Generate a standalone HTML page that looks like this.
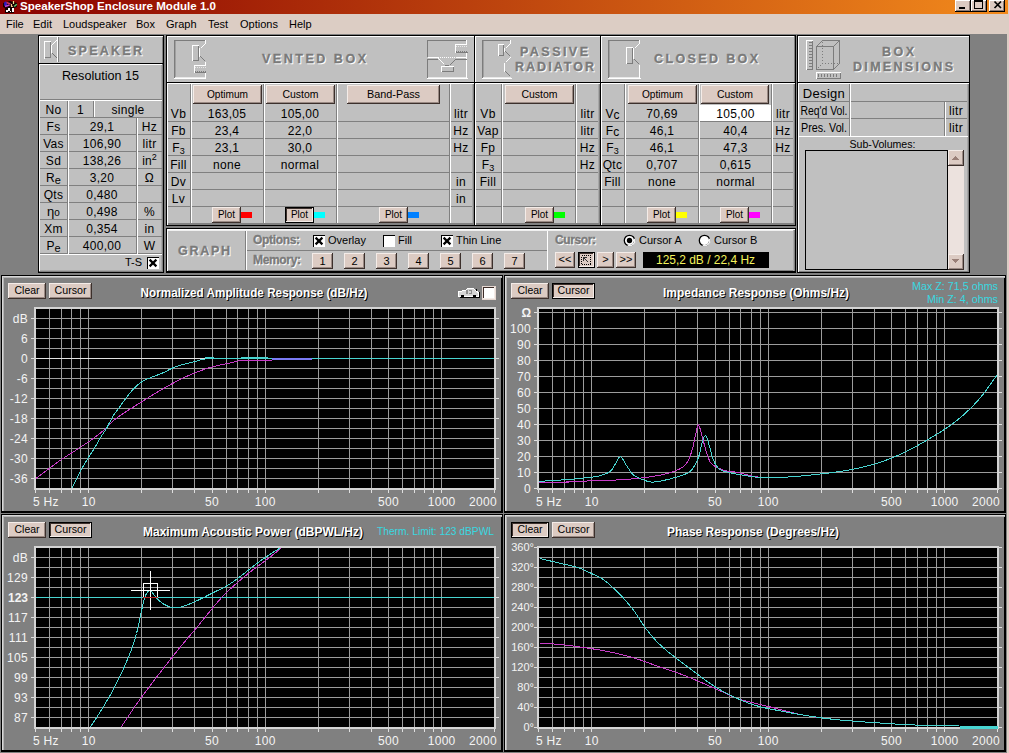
<!DOCTYPE html>
<html><head><meta charset="utf-8"><title>SpeakerShop Enclosure Module 1.0</title>
<style>html,body{margin:0;padding:0;background:#808080;overflow:hidden}
svg{display:block;font-family:"Liberation Sans", sans-serif}
text{font-family:"Liberation Sans", sans-serif}</style></head>
<body><svg width="1009" height="753" viewBox="0 0 1009 753" shape-rendering="crispEdges">
<rect x="0" y="0" width="1009" height="753" fill="#808080"/>
<rect x="1007" y="0" width="2" height="753" fill="#dccdc4"/>
<defs><linearGradient id="tg" x1="0" x2="1" y1="0" y2="0"><stop offset="0" stop-color="#8a0000"/><stop offset="1" stop-color="#f28a1c"/></linearGradient></defs>
<rect x="0" y="0" width="1008" height="14" fill="url(#tg)"/>
<text x="20" y="10" font-size="11.5" fill="#fff" font-weight="bold" textLength="196" lengthAdjust="spacingAndGlyphs">SpeakerShop Enclosure Module 1.0</text>
<g shape-rendering="auto"><path d="M3 3 L10 1 L17 3 L17 7 L14 8 L14 13 L5 13 L5 8 L3 7 Z" fill="#000" opacity="0.85"/><ellipse cx="5.6" cy="4" rx="1.6" ry="2.4" fill="#3018c0"/><path d="M5 6.5 L9.5 5" stroke="#c040d0" stroke-width="1.6"/><path d="M6.5 2.5 L10.5 4" stroke="#d03060" stroke-width="1.4"/><path d="M11.5 4 L11.5 6.5 L12.8 6.5" stroke="#f8c890" stroke-width="1.2" fill="none"/><path d="M13.5 1 L13.5 4" stroke="#f0e090" stroke-width="1.2"/><path d="M14.2 6.5 L16.8 4.2" stroke="#60d070" stroke-width="1.4"/></g>
<rect x="6" y="10" width="2" height="2" fill="#fff"/>
<rect x="8" y="8" width="2" height="3" fill="#fff"/>
<rect x="10" y="11" width="1" height="1" fill="#fff"/>
<rect x="12" y="8" width="2" height="4" fill="#fff"/>
<rect x="955" y="0" width="16" height="12" fill="#dccbc3"/>
<rect x="955" y="0" width="16" height="1" fill="#fff"/>
<rect x="955" y="0" width="1" height="12" fill="#fff"/>
<rect x="955" y="11" width="16" height="1" fill="#000"/>
<rect x="970" y="0" width="1" height="12" fill="#000"/>
<rect x="956" y="10" width="14" height="1" fill="#8a7a74"/>
<rect x="969" y="1" width="1" height="10" fill="#8a7a74"/>
<rect x="971" y="0" width="16" height="12" fill="#dccbc3"/>
<rect x="971" y="0" width="16" height="1" fill="#fff"/>
<rect x="971" y="0" width="1" height="12" fill="#fff"/>
<rect x="971" y="11" width="16" height="1" fill="#000"/>
<rect x="986" y="0" width="1" height="12" fill="#000"/>
<rect x="972" y="10" width="14" height="1" fill="#8a7a74"/>
<rect x="985" y="1" width="1" height="10" fill="#8a7a74"/>
<rect x="989" y="0" width="16" height="12" fill="#dccbc3"/>
<rect x="989" y="0" width="16" height="1" fill="#fff"/>
<rect x="989" y="0" width="1" height="12" fill="#fff"/>
<rect x="989" y="11" width="16" height="1" fill="#000"/>
<rect x="1004" y="0" width="1" height="12" fill="#000"/>
<rect x="990" y="10" width="14" height="1" fill="#8a7a74"/>
<rect x="1003" y="1" width="1" height="10" fill="#8a7a74"/>
<rect x="959" y="7" width="6" height="2" fill="#000"/>
<rect x="974" y="0" width="9" height="1" fill="#000"/>
<rect x="974" y="8" width="9" height="1" fill="#000"/>
<rect x="974" y="0" width="1" height="9" fill="#000"/>
<rect x="982" y="0" width="1" height="9" fill="#000"/>
<rect x="974" y="1" width="9" height="1" fill="#000"/>
<path d="M994.5 1.5 L1001 8 M1001 1.5 L994.5 8" stroke="#000" stroke-width="1.7" shape-rendering="auto"/>
<rect x="0" y="14" width="1009" height="20" fill="#dccdc4"/>
<text x="6" y="28" font-size="11" fill="#000">File</text>
<text x="33" y="28" font-size="11" fill="#000">Edit</text>
<text x="63" y="28" font-size="11" fill="#000">Loudspeaker</text>
<text x="136" y="28" font-size="11" fill="#000">Box</text>
<text x="166" y="28" font-size="11" fill="#000">Graph</text>
<text x="208" y="28" font-size="11" fill="#000">Test</text>
<text x="240" y="28" font-size="11" fill="#000">Options</text>
<text x="289" y="28" font-size="11" fill="#000">Help</text>
<rect x="38" y="35" width="126" height="1" fill="#000"/>
<rect x="38" y="272" width="126" height="1" fill="#000"/>
<rect x="38" y="35" width="1" height="238" fill="#000"/>
<rect x="163" y="35" width="1" height="238" fill="#000"/>
<rect x="39" y="36" width="124" height="236" fill="#c0c0c0"/>
<rect x="39" y="36" width="124" height="1" fill="#fff"/>
<rect x="39" y="36" width="1" height="27" fill="#fff"/>
<rect x="162" y="37" width="1" height="26" fill="#808080"/>
<rect x="39" y="63" width="124" height="1" fill="#000"/>
<rect x="39" y="64" width="124" height="1" fill="#fff"/>
<rect x="39" y="64" width="1" height="208" fill="#fff"/>
<rect x="161" y="65" width="1" height="206" fill="#a8a8a8"/>
<rect x="162" y="64" width="1" height="208" fill="#808080"/>
<rect x="40" y="270" width="122" height="1" fill="#a8a8a8"/>
<rect x="39" y="271" width="124" height="1" fill="#808080"/>
<rect x="44" y="41" width="7" height="1" fill="#fff"/>
<rect x="44" y="41" width="1" height="18" fill="#fff"/>
<rect x="45" y="57" width="6" height="1" fill="#808080"/>
<rect x="50" y="42" width="1" height="16" fill="#808080"/>
<path d="M51.5 45.5 L57 40 M51.5 45 L51.5 53.5" stroke="#fff" stroke-width="1" fill="none" shape-rendering="auto"/><path d="M52 53 L57 58" stroke="#707070" stroke-width="1" fill="none" shape-rendering="auto"/>
<rect x="57" y="37" width="1" height="25" fill="#fff"/>
<rect x="58" y="37" width="1" height="25" fill="#808080"/>
<text x="69" y="55.5" font-size="12.5" fill="#ffffff" font-weight="bold" textLength="74" lengthAdjust="spacing" letter-spacing="0" stroke="#ffffff" stroke-width="0.35">SPEAKER</text>
<text x="68" y="54.5" font-size="12.5" fill="#7a7a7a" font-weight="bold" textLength="74" lengthAdjust="spacing" letter-spacing="0" stroke="#7a7a7a" stroke-width="0.35">SPEAKER</text>
<text x="100.5" y="80" font-size="13" fill="#000" text-anchor="middle" textLength="77" lengthAdjust="spacingAndGlyphs">Resolution 15</text>
<rect x="40" y="99" width="122" height="1" fill="#808080"/>
<rect x="40" y="100" width="122" height="1" fill="#fff"/>
<rect x="40" y="117" width="122" height="1" fill="#808080"/>
<rect x="40" y="134" width="122" height="1" fill="#808080"/>
<rect x="40" y="151" width="122" height="1" fill="#808080"/>
<rect x="40" y="168" width="122" height="1" fill="#808080"/>
<rect x="40" y="185" width="122" height="1" fill="#808080"/>
<rect x="40" y="202" width="122" height="1" fill="#808080"/>
<rect x="40" y="219" width="122" height="1" fill="#808080"/>
<rect x="40" y="236" width="122" height="1" fill="#808080"/>
<rect x="40" y="253" width="122" height="1" fill="#808080"/>
<rect x="40" y="254" width="122" height="1" fill="#fff"/>
<rect x="67" y="101" width="1" height="153" fill="#808080"/>
<rect x="68" y="101" width="1" height="153" fill="#fff"/>
<rect x="136" y="118" width="1" height="136" fill="#808080"/>
<rect x="137" y="118" width="1" height="136" fill="#fff"/>
<rect x="93" y="101" width="1" height="16" fill="#808080"/>
<rect x="94" y="101" width="1" height="16" fill="#fff"/>
<text x="53.5" y="114" font-size="12" fill="#000" text-anchor="middle" letter-spacing="0.3">No</text>
<text x="80.5" y="114" font-size="12" fill="#000" text-anchor="middle" letter-spacing="0.3">1</text>
<text x="128" y="114" font-size="12" fill="#000" text-anchor="middle" letter-spacing="0.3">single</text>
<text x="53.5" y="131" font-size="12" fill="#000" text-anchor="middle" letter-spacing="0.3">Fs</text>
<text x="102" y="131" font-size="12" fill="#000" text-anchor="middle" letter-spacing="0.3">29,1</text>
<text x="149.5" y="131" font-size="12" fill="#000" text-anchor="middle" letter-spacing="0.3">Hz</text>
<text x="53.5" y="148" font-size="12" fill="#000" text-anchor="middle" letter-spacing="0.3">Vas</text>
<text x="102" y="148" font-size="12" fill="#000" text-anchor="middle" letter-spacing="0.3">106,90</text>
<text x="149.5" y="148" font-size="12" fill="#000" text-anchor="middle" letter-spacing="0.3">litr</text>
<text x="53.5" y="165" font-size="12" fill="#000" text-anchor="middle" letter-spacing="0.3">Sd</text>
<text x="102" y="165" font-size="12" fill="#000" text-anchor="middle" letter-spacing="0.3">138,26</text>
<text x="149.5" y="165" font-size="12" text-anchor="middle">in<tspan font-size="9" dy="-5">2</tspan></text>
<text x="53.5" y="182" font-size="12" text-anchor="middle">R<tspan font-size="11" dy="2">e</tspan></text>
<text x="102" y="182" font-size="12" fill="#000" text-anchor="middle" letter-spacing="0.3">3,20</text>
<text x="149.5" y="182" font-size="12" fill="#000" text-anchor="middle" letter-spacing="0.3">Ω</text>
<text x="53.5" y="199" font-size="12" fill="#000" text-anchor="middle" letter-spacing="0.3">Qts</text>
<text x="102" y="199" font-size="12" fill="#000" text-anchor="middle" letter-spacing="0.3">0,480</text>
<text x="149.5" y="199" font-size="12" fill="#000" text-anchor="middle" letter-spacing="0.3"></text>
<text x="53.5" y="216" font-size="13" text-anchor="middle">η<tspan font-size="10">o</tspan></text>
<text x="102" y="216" font-size="12" fill="#000" text-anchor="middle" letter-spacing="0.3">0,498</text>
<text x="149.5" y="216" font-size="12" fill="#000" text-anchor="middle" letter-spacing="0.3">%</text>
<text x="53.5" y="233" font-size="12" fill="#000" text-anchor="middle" letter-spacing="0.3">Xm</text>
<text x="102" y="233" font-size="12" fill="#000" text-anchor="middle" letter-spacing="0.3">0,354</text>
<text x="149.5" y="233" font-size="12" fill="#000" text-anchor="middle" letter-spacing="0.3">in</text>
<text x="53.5" y="250" font-size="12" text-anchor="middle">P<tspan font-size="11" dy="2">e</tspan></text>
<text x="102" y="250" font-size="12" fill="#000" text-anchor="middle" letter-spacing="0.3">400,00</text>
<text x="149.5" y="250" font-size="12" fill="#000" text-anchor="middle" letter-spacing="0.3">W</text>
<text x="142" y="266" font-size="11" fill="#000" text-anchor="end">T-S</text>
<rect x="147" y="257" width="12" height="12" fill="#fff"/>
<rect x="147" y="257" width="12" height="1" fill="#000"/>
<rect x="147" y="257" width="1" height="12" fill="#000"/>
<rect x="148" y="268" width="11" height="1" fill="#fff"/>
<rect x="158" y="258" width="1" height="11" fill="#fff"/>
<path d="M149.6 259.6 L156.4 266.4 M156.4 259.6 L149.6 266.4" stroke="#000" stroke-width="2.2" shape-rendering="auto"/>
<rect x="166" y="35" width="630" height="1" fill="#000"/>
<rect x="166" y="225" width="630" height="1" fill="#000"/>
<rect x="166" y="35" width="1" height="191" fill="#000"/>
<rect x="795" y="35" width="1" height="191" fill="#000"/>
<rect x="167" y="36" width="628" height="189" fill="#c0c0c0"/>
<rect x="474" y="35" width="1" height="191" fill="#000"/>
<rect x="600" y="35" width="1" height="191" fill="#000"/>
<rect x="167" y="36" width="307" height="1" fill="#fff"/>
<rect x="167" y="36" width="1" height="46" fill="#fff"/>
<rect x="167" y="82" width="307" height="1" fill="#000"/>
<rect x="167" y="83" width="307" height="1" fill="#fff"/>
<rect x="167" y="83" width="1" height="142" fill="#fff"/>
<rect x="473" y="84" width="1" height="141" fill="#808080"/>
<rect x="168" y="224" width="306" height="1" fill="#808080"/>
<rect x="168" y="223" width="306" height="1" fill="#808080"/>
<rect x="472" y="84" width="1" height="139" fill="#a8a8a8"/>
<rect x="475" y="36" width="125" height="1" fill="#fff"/>
<rect x="475" y="36" width="1" height="46" fill="#fff"/>
<rect x="475" y="82" width="125" height="1" fill="#000"/>
<rect x="475" y="83" width="125" height="1" fill="#fff"/>
<rect x="475" y="83" width="1" height="142" fill="#fff"/>
<rect x="599" y="84" width="1" height="141" fill="#808080"/>
<rect x="476" y="224" width="124" height="1" fill="#808080"/>
<rect x="476" y="223" width="124" height="1" fill="#808080"/>
<rect x="598" y="84" width="1" height="139" fill="#a8a8a8"/>
<rect x="601" y="36" width="194" height="1" fill="#fff"/>
<rect x="601" y="36" width="1" height="46" fill="#fff"/>
<rect x="601" y="82" width="194" height="1" fill="#000"/>
<rect x="601" y="83" width="194" height="1" fill="#fff"/>
<rect x="601" y="83" width="1" height="142" fill="#fff"/>
<rect x="794" y="84" width="1" height="141" fill="#808080"/>
<rect x="602" y="224" width="193" height="1" fill="#808080"/>
<rect x="602" y="223" width="193" height="1" fill="#808080"/>
<rect x="793" y="84" width="1" height="139" fill="#a8a8a8"/>
<rect x="794" y="36" width="1" height="46" fill="#808080"/>
<rect x="168" y="121" width="304" height="1" fill="#808080"/>
<rect x="168" y="138" width="304" height="1" fill="#808080"/>
<rect x="168" y="155" width="304" height="1" fill="#808080"/>
<rect x="168" y="172" width="304" height="1" fill="#808080"/>
<rect x="168" y="189" width="304" height="1" fill="#808080"/>
<rect x="168" y="206" width="304" height="1" fill="#808080"/>
<rect x="190" y="84" width="1" height="139" fill="#808080"/>
<rect x="191" y="84" width="1" height="139" fill="#fff"/>
<rect x="263" y="84" width="1" height="139" fill="#808080"/>
<rect x="264" y="84" width="1" height="139" fill="#fff"/>
<rect x="336" y="84" width="1" height="139" fill="#808080"/>
<rect x="337" y="84" width="1" height="139" fill="#fff"/>
<rect x="449" y="84" width="1" height="139" fill="#808080"/>
<rect x="450" y="84" width="1" height="139" fill="#fff"/>
<text x="178.5" y="118" font-size="12" fill="#000" text-anchor="middle" letter-spacing="0.3">Vb</text>
<text x="178.5" y="135" font-size="12" fill="#000" text-anchor="middle" letter-spacing="0.3">Fb</text>
<text x="178.5" y="152" font-size="12" text-anchor="middle">F<tspan font-size="9" dy="2">3</tspan></text>
<text x="178.5" y="169" font-size="12" fill="#000" text-anchor="middle" letter-spacing="0.3">Fill</text>
<text x="178.5" y="186" font-size="12" fill="#000" text-anchor="middle" letter-spacing="0.3">Dv</text>
<text x="178.5" y="203" font-size="12" fill="#000" text-anchor="middle" letter-spacing="0.3">Lv</text>
<text x="227" y="118" font-size="12" fill="#000" text-anchor="middle" letter-spacing="0.3">163,05</text>
<text x="227" y="135" font-size="12" fill="#000" text-anchor="middle" letter-spacing="0.3">23,4</text>
<text x="227" y="152" font-size="12" fill="#000" text-anchor="middle" letter-spacing="0.3">23,1</text>
<text x="227" y="169" font-size="12" fill="#000" text-anchor="middle" letter-spacing="0.3">none</text>
<text x="300" y="118" font-size="12" fill="#000" text-anchor="middle" letter-spacing="0.3">105,00</text>
<text x="300" y="135" font-size="12" fill="#000" text-anchor="middle" letter-spacing="0.3">22,0</text>
<text x="300" y="152" font-size="12" fill="#000" text-anchor="middle" letter-spacing="0.3">30,0</text>
<text x="300" y="169" font-size="12" fill="#000" text-anchor="middle" letter-spacing="0.3">normal</text>
<text x="461" y="118" font-size="12" fill="#000" text-anchor="middle" letter-spacing="0.3">litr</text>
<text x="461" y="135" font-size="12" fill="#000" text-anchor="middle" letter-spacing="0.3">Hz</text>
<text x="461" y="152" font-size="12" fill="#000" text-anchor="middle" letter-spacing="0.3">Hz</text>
<text x="461" y="186" font-size="12" fill="#000" text-anchor="middle" letter-spacing="0.3">in</text>
<text x="461" y="203" font-size="12" fill="#000" text-anchor="middle" letter-spacing="0.3">in</text>
<rect x="193" y="85" width="69" height="19" fill="#dccbc3"/>
<rect x="193" y="85" width="69" height="1" fill="#f4ece8"/>
<rect x="193" y="85" width="1" height="19" fill="#f4ece8"/>
<rect x="193" y="103" width="69" height="1" fill="#3c302c"/>
<rect x="261" y="85" width="1" height="19" fill="#3c302c"/>
<rect x="194" y="102" width="67" height="1" fill="#9a8a84"/>
<rect x="260" y="86" width="1" height="17" fill="#9a8a84"/>
<text x="227.5" y="98" font-size="11" fill="#000" text-anchor="middle" textLength="41" lengthAdjust="spacingAndGlyphs">Optimum</text>
<rect x="266" y="85" width="69" height="19" fill="#dccbc3"/>
<rect x="266" y="85" width="69" height="1" fill="#f4ece8"/>
<rect x="266" y="85" width="1" height="19" fill="#f4ece8"/>
<rect x="266" y="103" width="69" height="1" fill="#3c302c"/>
<rect x="334" y="85" width="1" height="19" fill="#3c302c"/>
<rect x="267" y="102" width="67" height="1" fill="#9a8a84"/>
<rect x="333" y="86" width="1" height="17" fill="#9a8a84"/>
<text x="300.5" y="98" font-size="11" fill="#000" text-anchor="middle" textLength="36" lengthAdjust="spacingAndGlyphs">Custom</text>
<rect x="347" y="85" width="93" height="19" fill="#dccbc3"/>
<rect x="347" y="85" width="93" height="1" fill="#f4ece8"/>
<rect x="347" y="85" width="1" height="19" fill="#f4ece8"/>
<rect x="347" y="103" width="93" height="1" fill="#3c302c"/>
<rect x="439" y="85" width="1" height="19" fill="#3c302c"/>
<rect x="348" y="102" width="91" height="1" fill="#9a8a84"/>
<rect x="438" y="86" width="1" height="17" fill="#9a8a84"/>
<text x="393.5" y="98" font-size="11" fill="#000" text-anchor="middle" textLength="53" lengthAdjust="spacingAndGlyphs">Band-Pass</text>
<rect x="212" y="207" width="29" height="16" fill="#dccbc3"/>
<rect x="212" y="207" width="29" height="1" fill="#f4ece8"/>
<rect x="212" y="207" width="1" height="16" fill="#f4ece8"/>
<rect x="212" y="222" width="29" height="1" fill="#3c302c"/>
<rect x="240" y="207" width="1" height="16" fill="#3c302c"/>
<rect x="213" y="221" width="27" height="1" fill="#9a8a84"/>
<rect x="239" y="208" width="1" height="14" fill="#9a8a84"/>
<text x="226.5" y="218" font-size="11" fill="#000" text-anchor="middle" textLength="17" lengthAdjust="spacingAndGlyphs">Plot</text>
<rect x="241" y="212" width="11" height="6" fill="#ff0000"/>
<rect x="285" y="207" width="29" height="16" fill="#dccbc3"/>
<rect x="285" y="207" width="29" height="1" fill="#000"/>
<rect x="285" y="222" width="29" height="1" fill="#000"/>
<rect x="285" y="207" width="1" height="16" fill="#000"/>
<rect x="313" y="207" width="1" height="16" fill="#000"/>
<rect x="286" y="208" width="27" height="1" fill="#3c302c"/>
<rect x="286" y="208" width="1" height="14" fill="#3c302c"/>
<rect x="286" y="221" width="27" height="1" fill="#f4ece8"/>
<rect x="312" y="208" width="1" height="14" fill="#f4ece8"/>
<text x="299.5" y="218" font-size="11" fill="#000" text-anchor="middle" textLength="17" lengthAdjust="spacingAndGlyphs">Plot</text>
<rect x="314" y="212" width="11" height="6" fill="#00ffff"/>
<rect x="379" y="207" width="29" height="16" fill="#dccbc3"/>
<rect x="379" y="207" width="29" height="1" fill="#f4ece8"/>
<rect x="379" y="207" width="1" height="16" fill="#f4ece8"/>
<rect x="379" y="222" width="29" height="1" fill="#3c302c"/>
<rect x="407" y="207" width="1" height="16" fill="#3c302c"/>
<rect x="380" y="221" width="27" height="1" fill="#9a8a84"/>
<rect x="406" y="208" width="1" height="14" fill="#9a8a84"/>
<text x="393.5" y="218" font-size="11" fill="#000" text-anchor="middle" textLength="17" lengthAdjust="spacingAndGlyphs">Plot</text>
<rect x="408" y="212" width="11" height="6" fill="#0080ff"/>
<rect x="476" y="121" width="122" height="1" fill="#808080"/>
<rect x="476" y="138" width="122" height="1" fill="#808080"/>
<rect x="476" y="155" width="122" height="1" fill="#808080"/>
<rect x="476" y="172" width="122" height="1" fill="#808080"/>
<rect x="476" y="189" width="122" height="1" fill="#808080"/>
<rect x="476" y="206" width="122" height="1" fill="#808080"/>
<rect x="501" y="84" width="1" height="139" fill="#808080"/>
<rect x="502" y="84" width="1" height="139" fill="#fff"/>
<rect x="575" y="84" width="1" height="139" fill="#808080"/>
<rect x="576" y="84" width="1" height="139" fill="#fff"/>
<text x="488" y="118" font-size="12" fill="#000" text-anchor="middle" letter-spacing="0.3">Vb</text>
<text x="488" y="135" font-size="12" fill="#000" text-anchor="middle" letter-spacing="0.3">Vap</text>
<text x="488" y="152" font-size="12" fill="#000" text-anchor="middle" letter-spacing="0.3">Fp</text>
<text x="488" y="169" font-size="12" text-anchor="middle">F<tspan font-size="9" dy="2">3</tspan></text>
<text x="488" y="186" font-size="12" fill="#000" text-anchor="middle" letter-spacing="0.3">Fill</text>
<text x="587.5" y="118" font-size="12" fill="#000" text-anchor="middle" letter-spacing="0.3">litr</text>
<text x="587.5" y="135" font-size="12" fill="#000" text-anchor="middle" letter-spacing="0.3">litr</text>
<text x="587.5" y="152" font-size="12" fill="#000" text-anchor="middle" letter-spacing="0.3">Hz</text>
<text x="587.5" y="169" font-size="12" fill="#000" text-anchor="middle" letter-spacing="0.3">Hz</text>
<rect x="505" y="85" width="69" height="19" fill="#dccbc3"/>
<rect x="505" y="85" width="69" height="1" fill="#f4ece8"/>
<rect x="505" y="85" width="1" height="19" fill="#f4ece8"/>
<rect x="505" y="103" width="69" height="1" fill="#3c302c"/>
<rect x="573" y="85" width="1" height="19" fill="#3c302c"/>
<rect x="506" y="102" width="67" height="1" fill="#9a8a84"/>
<rect x="572" y="86" width="1" height="17" fill="#9a8a84"/>
<text x="539.5" y="98" font-size="11" fill="#000" text-anchor="middle" textLength="36" lengthAdjust="spacingAndGlyphs">Custom</text>
<rect x="525" y="207" width="29" height="16" fill="#dccbc3"/>
<rect x="525" y="207" width="29" height="1" fill="#f4ece8"/>
<rect x="525" y="207" width="1" height="16" fill="#f4ece8"/>
<rect x="525" y="222" width="29" height="1" fill="#3c302c"/>
<rect x="553" y="207" width="1" height="16" fill="#3c302c"/>
<rect x="526" y="221" width="27" height="1" fill="#9a8a84"/>
<rect x="552" y="208" width="1" height="14" fill="#9a8a84"/>
<text x="539.5" y="218" font-size="11" fill="#000" text-anchor="middle" textLength="17" lengthAdjust="spacingAndGlyphs">Plot</text>
<rect x="554" y="212" width="11" height="6" fill="#00ff00"/>
<rect x="602" y="121" width="191" height="1" fill="#808080"/>
<rect x="602" y="138" width="191" height="1" fill="#808080"/>
<rect x="602" y="155" width="191" height="1" fill="#808080"/>
<rect x="602" y="172" width="191" height="1" fill="#808080"/>
<rect x="602" y="189" width="191" height="1" fill="#808080"/>
<rect x="602" y="206" width="191" height="1" fill="#808080"/>
<rect x="624" y="84" width="1" height="139" fill="#808080"/>
<rect x="625" y="84" width="1" height="139" fill="#fff"/>
<rect x="698" y="84" width="1" height="139" fill="#808080"/>
<rect x="699" y="84" width="1" height="139" fill="#fff"/>
<rect x="771" y="84" width="1" height="139" fill="#808080"/>
<rect x="772" y="84" width="1" height="139" fill="#fff"/>
<rect x="700" y="105" width="71" height="16" fill="#fff"/>
<text x="612.5" y="118" font-size="12" text-anchor="middle">V<tspan font-size="12" dy="1">c</tspan></text>
<text x="612.5" y="135" font-size="12" text-anchor="middle">F<tspan font-size="12" dy="1">c</tspan></text>
<text x="612.5" y="152" font-size="12" text-anchor="middle">F<tspan font-size="9" dy="2">3</tspan></text>
<text x="612.5" y="169" font-size="12" fill="#000" text-anchor="middle" letter-spacing="0.3">Qtc</text>
<text x="612.5" y="186" font-size="12" fill="#000" text-anchor="middle" letter-spacing="0.3">Fill</text>
<text x="662" y="118" font-size="12" fill="#000" text-anchor="middle" letter-spacing="0.3">70,69</text>
<text x="662" y="135" font-size="12" fill="#000" text-anchor="middle" letter-spacing="0.3">46,1</text>
<text x="662" y="152" font-size="12" fill="#000" text-anchor="middle" letter-spacing="0.3">46,1</text>
<text x="662" y="169" font-size="12" fill="#000" text-anchor="middle" letter-spacing="0.3">0,707</text>
<text x="662" y="186" font-size="12" fill="#000" text-anchor="middle" letter-spacing="0.3">none</text>
<text x="735.5" y="118" font-size="12" fill="#000" text-anchor="middle" letter-spacing="0.3">105,00</text>
<text x="735.5" y="135" font-size="12" fill="#000" text-anchor="middle" letter-spacing="0.3">40,4</text>
<text x="735.5" y="152" font-size="12" fill="#000" text-anchor="middle" letter-spacing="0.3">47,3</text>
<text x="735.5" y="169" font-size="12" fill="#000" text-anchor="middle" letter-spacing="0.3">0,615</text>
<text x="735.5" y="186" font-size="12" fill="#000" text-anchor="middle" letter-spacing="0.3">normal</text>
<text x="783" y="118" font-size="12" fill="#000" text-anchor="middle" letter-spacing="0.3">litr</text>
<text x="783" y="135" font-size="12" fill="#000" text-anchor="middle" letter-spacing="0.3">Hz</text>
<text x="783" y="152" font-size="12" fill="#000" text-anchor="middle" letter-spacing="0.3">Hz</text>
<rect x="628" y="85" width="69" height="19" fill="#dccbc3"/>
<rect x="628" y="85" width="69" height="1" fill="#f4ece8"/>
<rect x="628" y="85" width="1" height="19" fill="#f4ece8"/>
<rect x="628" y="103" width="69" height="1" fill="#3c302c"/>
<rect x="696" y="85" width="1" height="19" fill="#3c302c"/>
<rect x="629" y="102" width="67" height="1" fill="#9a8a84"/>
<rect x="695" y="86" width="1" height="17" fill="#9a8a84"/>
<text x="662.5" y="98" font-size="11" fill="#000" text-anchor="middle" textLength="41" lengthAdjust="spacingAndGlyphs">Optimum</text>
<rect x="701" y="85" width="68" height="19" fill="#dccbc3"/>
<rect x="701" y="85" width="68" height="1" fill="#f4ece8"/>
<rect x="701" y="85" width="1" height="19" fill="#f4ece8"/>
<rect x="701" y="103" width="68" height="1" fill="#3c302c"/>
<rect x="768" y="85" width="1" height="19" fill="#3c302c"/>
<rect x="702" y="102" width="66" height="1" fill="#9a8a84"/>
<rect x="767" y="86" width="1" height="17" fill="#9a8a84"/>
<text x="735.0" y="98" font-size="11" fill="#000" text-anchor="middle" textLength="36" lengthAdjust="spacingAndGlyphs">Custom</text>
<rect x="647" y="207" width="29" height="16" fill="#dccbc3"/>
<rect x="647" y="207" width="29" height="1" fill="#f4ece8"/>
<rect x="647" y="207" width="1" height="16" fill="#f4ece8"/>
<rect x="647" y="222" width="29" height="1" fill="#3c302c"/>
<rect x="675" y="207" width="1" height="16" fill="#3c302c"/>
<rect x="648" y="221" width="27" height="1" fill="#9a8a84"/>
<rect x="674" y="208" width="1" height="14" fill="#9a8a84"/>
<text x="661.5" y="218" font-size="11" fill="#000" text-anchor="middle" textLength="17" lengthAdjust="spacingAndGlyphs">Plot</text>
<rect x="676" y="212" width="11" height="6" fill="#ffff00"/>
<rect x="720" y="207" width="29" height="16" fill="#dccbc3"/>
<rect x="720" y="207" width="29" height="1" fill="#f4ece8"/>
<rect x="720" y="207" width="1" height="16" fill="#f4ece8"/>
<rect x="720" y="222" width="29" height="1" fill="#3c302c"/>
<rect x="748" y="207" width="1" height="16" fill="#3c302c"/>
<rect x="721" y="221" width="27" height="1" fill="#9a8a84"/>
<rect x="747" y="208" width="1" height="14" fill="#9a8a84"/>
<text x="734.5" y="218" font-size="11" fill="#000" text-anchor="middle" textLength="17" lengthAdjust="spacingAndGlyphs">Plot</text>
<rect x="749" y="212" width="11" height="6" fill="#ff00ff"/>
<text x="263" y="64" font-size="12.5" fill="#ffffff" font-weight="bold" textLength="104" lengthAdjust="spacing" letter-spacing="0" stroke="#ffffff" stroke-width="0.35">VENTED BOX</text>
<text x="262" y="63" font-size="12.5" fill="#7a7a7a" font-weight="bold" textLength="104" lengthAdjust="spacing" letter-spacing="0" stroke="#7a7a7a" stroke-width="0.35">VENTED BOX</text>
<text x="521" y="57" font-size="12.5" fill="#ffffff" font-weight="bold" textLength="68" lengthAdjust="spacing" letter-spacing="0" stroke="#ffffff" stroke-width="0.35">PASSIVE</text>
<text x="520" y="56" font-size="12.5" fill="#7a7a7a" font-weight="bold" textLength="68" lengthAdjust="spacing" letter-spacing="0" stroke="#7a7a7a" stroke-width="0.35">PASSIVE</text>
<text x="516" y="72" font-size="12.5" fill="#ffffff" font-weight="bold" textLength="79" lengthAdjust="spacing" letter-spacing="0" stroke="#ffffff" stroke-width="0.35">RADIATOR</text>
<text x="515" y="71" font-size="12.5" fill="#7a7a7a" font-weight="bold" textLength="79" lengthAdjust="spacing" letter-spacing="0" stroke="#7a7a7a" stroke-width="0.35">RADIATOR</text>
<text x="655" y="64" font-size="12.5" fill="#ffffff" font-weight="bold" textLength="104" lengthAdjust="spacing" letter-spacing="0" stroke="#ffffff" stroke-width="0.35">CLOSED BOX</text>
<text x="654" y="63" font-size="12.5" fill="#7a7a7a" font-weight="bold" textLength="104" lengthAdjust="spacing" letter-spacing="0" stroke="#7a7a7a" stroke-width="0.35">CLOSED BOX</text>
<rect x="797" y="35" width="173" height="1" fill="#000"/>
<rect x="797" y="272" width="173" height="1" fill="#000"/>
<rect x="797" y="35" width="1" height="238" fill="#000"/>
<rect x="969" y="35" width="1" height="238" fill="#000"/>
<rect x="798" y="36" width="171" height="236" fill="#c0c0c0"/>
<rect x="798" y="36" width="171" height="1" fill="#fff"/>
<rect x="798" y="36" width="1" height="46" fill="#fff"/>
<rect x="798" y="82" width="171" height="1" fill="#000"/>
<rect x="798" y="83" width="171" height="1" fill="#fff"/>
<rect x="798" y="83" width="1" height="189" fill="#fff"/>
<rect x="968" y="84" width="1" height="188" fill="#808080"/>
<rect x="799" y="271" width="170" height="1" fill="#808080"/>
<rect x="967" y="84" width="1" height="187" fill="#a8a8a8"/>
<rect x="800" y="101" width="167" height="1" fill="#808080"/>
<rect x="800" y="118" width="167" height="1" fill="#808080"/>
<rect x="849" y="84" width="1" height="52" fill="#808080"/>
<rect x="850" y="84" width="1" height="52" fill="#fff"/>
<rect x="944" y="102" width="1" height="34" fill="#808080"/>
<rect x="945" y="102" width="1" height="34" fill="#fff"/>
<rect x="799" y="136" width="169" height="1" fill="#fff"/>
<text x="883" y="57" font-size="12.5" fill="#ffffff" font-weight="bold" textLength="32" lengthAdjust="spacing" letter-spacing="0" stroke="#ffffff" stroke-width="0.35">BOX</text>
<text x="882" y="56" font-size="12.5" fill="#7a7a7a" font-weight="bold" textLength="32" lengthAdjust="spacing" letter-spacing="0" stroke="#7a7a7a" stroke-width="0.35">BOX</text>
<text x="854" y="72" font-size="12.5" fill="#ffffff" font-weight="bold" textLength="100" lengthAdjust="spacing" letter-spacing="0" stroke="#ffffff" stroke-width="0.35">DIMENSIONS</text>
<text x="853" y="71" font-size="12.5" fill="#7a7a7a" font-weight="bold" textLength="100" lengthAdjust="spacing" letter-spacing="0" stroke="#7a7a7a" stroke-width="0.35">DIMENSIONS</text>
<text x="824" y="98" font-size="13" fill="#000" text-anchor="middle" letter-spacing="0.3">Design</text>
<text x="824" y="115" font-size="12" fill="#000" text-anchor="middle" textLength="47" lengthAdjust="spacingAndGlyphs">Req'd Vol.</text>
<text x="824" y="132" font-size="12" fill="#000" text-anchor="middle" textLength="46" lengthAdjust="spacingAndGlyphs">Pres. Vol.</text>
<text x="956" y="115" font-size="12" fill="#000" text-anchor="middle" letter-spacing="0.3">litr</text>
<text x="956" y="132" font-size="12" fill="#000" text-anchor="middle" letter-spacing="0.3">litr</text>
<text x="882.5" y="148" font-size="11" fill="#000" text-anchor="middle" textLength="66" lengthAdjust="spacingAndGlyphs">Sub-Volumes:</text>
<rect x="805" y="150" width="143" height="1" fill="#000"/>
<rect x="805" y="269" width="143" height="1" fill="#000"/>
<rect x="805" y="150" width="1" height="120" fill="#000"/>
<rect x="947" y="150" width="1" height="120" fill="#000"/>
<rect x="948" y="151" width="16" height="118" fill="#ece2de"/>
<rect x="948" y="150" width="16" height="16" fill="#dccbc3"/>
<rect x="948" y="150" width="16" height="1" fill="#f4ece8"/>
<rect x="948" y="150" width="1" height="16" fill="#f4ece8"/>
<rect x="948" y="165" width="16" height="1" fill="#3c302c"/>
<rect x="963" y="150" width="1" height="16" fill="#3c302c"/>
<rect x="949" y="164" width="14" height="1" fill="#9a8a84"/>
<rect x="962" y="151" width="1" height="14" fill="#9a8a84"/>
<rect x="948" y="254" width="16" height="16" fill="#dccbc3"/>
<rect x="948" y="254" width="16" height="1" fill="#f4ece8"/>
<rect x="948" y="254" width="1" height="16" fill="#f4ece8"/>
<rect x="948" y="269" width="16" height="1" fill="#3c302c"/>
<rect x="963" y="254" width="1" height="16" fill="#3c302c"/>
<rect x="949" y="268" width="14" height="1" fill="#9a8a84"/>
<rect x="962" y="255" width="1" height="14" fill="#9a8a84"/>
<path d="M951.5 160 L955.5 156 L959.5 160 Z" fill="#9a8078"/><path d="M951.5 259 L955.5 263 L959.5 259 Z" fill="#9a8078"/>
<rect x="166" y="228" width="630" height="1" fill="#000"/>
<rect x="166" y="272" width="630" height="1" fill="#000"/>
<rect x="166" y="228" width="1" height="45" fill="#000"/>
<rect x="795" y="228" width="1" height="45" fill="#000"/>
<rect x="167" y="229" width="628" height="43" fill="#c0c0c0"/>
<rect x="167" y="229" width="628" height="1" fill="#fff"/>
<rect x="167" y="230" width="628" height="1" fill="#f0f0f0"/>
<rect x="167" y="229" width="1" height="43" fill="#fff"/>
<rect x="794" y="230" width="1" height="42" fill="#808080"/>
<rect x="168" y="270" width="627" height="1" fill="#808080"/>
<rect x="167" y="271" width="628" height="1" fill="#000"/>
<rect x="793" y="230" width="1" height="41" fill="#a8a8a8"/>
<rect x="245" y="231" width="1" height="39" fill="#808080"/>
<rect x="246" y="231" width="1" height="39" fill="#fff"/>
<rect x="247" y="250" width="300" height="1" fill="#808080"/>
<rect x="547" y="231" width="1" height="39" fill="#fff"/>
<text x="179" y="256" font-size="12.5" fill="#ffffff" font-weight="bold" textLength="52" lengthAdjust="spacing" letter-spacing="0" stroke="#ffffff" stroke-width="0.35">GRAPH</text>
<text x="178" y="255" font-size="12.5" fill="#7a7a7a" font-weight="bold" textLength="52" lengthAdjust="spacing" letter-spacing="0" stroke="#7a7a7a" stroke-width="0.35">GRAPH</text>
<text x="254" y="245" font-size="12" fill="#ffffff" font-weight="bold" textLength="47" lengthAdjust="spacing" letter-spacing="0" stroke="#ffffff" stroke-width="0.35">Options:</text>
<text x="253" y="244" font-size="12" fill="#7a7a7a" font-weight="bold" textLength="47" lengthAdjust="spacing" letter-spacing="0" stroke="#7a7a7a" stroke-width="0.35">Options:</text>
<text x="254" y="265" font-size="12" fill="#ffffff" font-weight="bold" textLength="48" lengthAdjust="spacing" letter-spacing="0" stroke="#ffffff" stroke-width="0.35">Memory:</text>
<text x="253" y="264" font-size="12" fill="#7a7a7a" font-weight="bold" textLength="48" lengthAdjust="spacing" letter-spacing="0" stroke="#7a7a7a" stroke-width="0.35">Memory:</text>
<text x="556" y="245" font-size="12" fill="#ffffff" font-weight="bold" textLength="41" lengthAdjust="spacing" letter-spacing="0" stroke="#ffffff" stroke-width="0.35">Cursor:</text>
<text x="555" y="244" font-size="12" fill="#7a7a7a" font-weight="bold" textLength="41" lengthAdjust="spacing" letter-spacing="0" stroke="#7a7a7a" stroke-width="0.35">Cursor:</text>
<rect x="313" y="235" width="12" height="12" fill="#fff"/>
<rect x="313" y="235" width="12" height="1" fill="#000"/>
<rect x="313" y="235" width="1" height="12" fill="#000"/>
<rect x="314" y="246" width="11" height="1" fill="#fff"/>
<rect x="324" y="236" width="1" height="11" fill="#fff"/>
<path d="M315.6 237.6 L322.4 244.4 M322.4 237.6 L315.6 244.4" stroke="#000" stroke-width="2.2" shape-rendering="auto"/>
<text x="328" y="244" font-size="11" fill="#000">Overlay</text>
<rect x="383" y="235" width="12" height="12" fill="#fff"/>
<rect x="383" y="235" width="12" height="1" fill="#000"/>
<rect x="383" y="235" width="1" height="12" fill="#000"/>
<rect x="384" y="246" width="11" height="1" fill="#fff"/>
<rect x="394" y="236" width="1" height="11" fill="#fff"/>
<text x="398" y="244" font-size="11" fill="#000">Fill</text>
<rect x="441" y="235" width="12" height="12" fill="#fff"/>
<rect x="441" y="235" width="12" height="1" fill="#000"/>
<rect x="441" y="235" width="1" height="12" fill="#000"/>
<rect x="442" y="246" width="11" height="1" fill="#fff"/>
<rect x="452" y="236" width="1" height="11" fill="#fff"/>
<path d="M443.6 237.6 L450.4 244.4 M450.4 237.6 L443.6 244.4" stroke="#000" stroke-width="2.2" shape-rendering="auto"/>
<text x="456" y="244" font-size="11" fill="#000">Thin Line</text>
<rect x="312" y="253" width="21" height="16" fill="#dccbc3"/>
<rect x="312" y="253" width="21" height="1" fill="#f4ece8"/>
<rect x="312" y="253" width="1" height="16" fill="#f4ece8"/>
<rect x="312" y="268" width="21" height="1" fill="#3c302c"/>
<rect x="332" y="253" width="1" height="16" fill="#3c302c"/>
<rect x="313" y="267" width="19" height="1" fill="#9a8a84"/>
<rect x="331" y="254" width="1" height="14" fill="#9a8a84"/>
<text x="322.5" y="265" font-size="11" fill="#000" text-anchor="middle">1</text>
<rect x="344" y="253" width="21" height="16" fill="#dccbc3"/>
<rect x="344" y="253" width="21" height="1" fill="#f4ece8"/>
<rect x="344" y="253" width="1" height="16" fill="#f4ece8"/>
<rect x="344" y="268" width="21" height="1" fill="#3c302c"/>
<rect x="364" y="253" width="1" height="16" fill="#3c302c"/>
<rect x="345" y="267" width="19" height="1" fill="#9a8a84"/>
<rect x="363" y="254" width="1" height="14" fill="#9a8a84"/>
<text x="354.5" y="265" font-size="11" fill="#000" text-anchor="middle">2</text>
<rect x="376" y="253" width="21" height="16" fill="#dccbc3"/>
<rect x="376" y="253" width="21" height="1" fill="#f4ece8"/>
<rect x="376" y="253" width="1" height="16" fill="#f4ece8"/>
<rect x="376" y="268" width="21" height="1" fill="#3c302c"/>
<rect x="396" y="253" width="1" height="16" fill="#3c302c"/>
<rect x="377" y="267" width="19" height="1" fill="#9a8a84"/>
<rect x="395" y="254" width="1" height="14" fill="#9a8a84"/>
<text x="386.5" y="265" font-size="11" fill="#000" text-anchor="middle">3</text>
<rect x="408" y="253" width="21" height="16" fill="#dccbc3"/>
<rect x="408" y="253" width="21" height="1" fill="#f4ece8"/>
<rect x="408" y="253" width="1" height="16" fill="#f4ece8"/>
<rect x="408" y="268" width="21" height="1" fill="#3c302c"/>
<rect x="428" y="253" width="1" height="16" fill="#3c302c"/>
<rect x="409" y="267" width="19" height="1" fill="#9a8a84"/>
<rect x="427" y="254" width="1" height="14" fill="#9a8a84"/>
<text x="418.5" y="265" font-size="11" fill="#000" text-anchor="middle">4</text>
<rect x="440" y="253" width="21" height="16" fill="#dccbc3"/>
<rect x="440" y="253" width="21" height="1" fill="#f4ece8"/>
<rect x="440" y="253" width="1" height="16" fill="#f4ece8"/>
<rect x="440" y="268" width="21" height="1" fill="#3c302c"/>
<rect x="460" y="253" width="1" height="16" fill="#3c302c"/>
<rect x="441" y="267" width="19" height="1" fill="#9a8a84"/>
<rect x="459" y="254" width="1" height="14" fill="#9a8a84"/>
<text x="450.5" y="265" font-size="11" fill="#000" text-anchor="middle">5</text>
<rect x="472" y="253" width="21" height="16" fill="#dccbc3"/>
<rect x="472" y="253" width="21" height="1" fill="#f4ece8"/>
<rect x="472" y="253" width="1" height="16" fill="#f4ece8"/>
<rect x="472" y="268" width="21" height="1" fill="#3c302c"/>
<rect x="492" y="253" width="1" height="16" fill="#3c302c"/>
<rect x="473" y="267" width="19" height="1" fill="#9a8a84"/>
<rect x="491" y="254" width="1" height="14" fill="#9a8a84"/>
<text x="482.5" y="265" font-size="11" fill="#000" text-anchor="middle">6</text>
<rect x="504" y="253" width="21" height="16" fill="#dccbc3"/>
<rect x="504" y="253" width="21" height="1" fill="#f4ece8"/>
<rect x="504" y="253" width="1" height="16" fill="#f4ece8"/>
<rect x="504" y="268" width="21" height="1" fill="#3c302c"/>
<rect x="524" y="253" width="1" height="16" fill="#3c302c"/>
<rect x="505" y="267" width="19" height="1" fill="#9a8a84"/>
<rect x="523" y="254" width="1" height="14" fill="#9a8a84"/>
<text x="514.5" y="265" font-size="11" fill="#000" text-anchor="middle">7</text>
<g shape-rendering="auto"><circle cx="629.5" cy="240.5" r="5.2" fill="#fff" stroke="#000" stroke-width="1.3"/><path d="M634.4 238.7 A5.2 5.2 0 0 1 627.7 245.4" stroke="#f0f0f0" stroke-width="1.5" fill="none"/><circle cx="629.5" cy="240.5" r="2.7" fill="#000"/></g>
<g shape-rendering="auto"><circle cx="704.5" cy="240.5" r="5.2" fill="#fff" stroke="#000" stroke-width="1.3"/><path d="M709.4 238.7 A5.2 5.2 0 0 1 702.7 245.4" stroke="#f0f0f0" stroke-width="1.5" fill="none"/></g>
<text x="639" y="244" font-size="11" fill="#000">Cursor A</text>
<text x="714" y="244" font-size="11" fill="#000">Cursor B</text>
<rect x="555" y="252" width="20" height="16" fill="#dccbc3"/>
<rect x="555" y="252" width="20" height="1" fill="#f4ece8"/>
<rect x="555" y="252" width="1" height="16" fill="#f4ece8"/>
<rect x="555" y="267" width="20" height="1" fill="#3c302c"/>
<rect x="574" y="252" width="1" height="16" fill="#3c302c"/>
<rect x="556" y="266" width="18" height="1" fill="#9a8a84"/>
<rect x="573" y="253" width="1" height="14" fill="#9a8a84"/>
<text x="565.0" y="263" font-size="11" fill="#000" text-anchor="middle">&lt;&lt;</text>
<rect x="578" y="252" width="17" height="16" fill="#dccbc3"/>
<rect x="578" y="252" width="17" height="1" fill="#000"/>
<rect x="578" y="267" width="17" height="1" fill="#000"/>
<rect x="578" y="252" width="1" height="16" fill="#000"/>
<rect x="594" y="252" width="1" height="16" fill="#000"/>
<rect x="579" y="253" width="15" height="1" fill="#3c302c"/>
<rect x="579" y="253" width="1" height="14" fill="#3c302c"/>
<rect x="579" y="266" width="15" height="1" fill="#f4ece8"/>
<rect x="593" y="253" width="1" height="14" fill="#f4ece8"/>
<rect x="581.5" y="255.5" width="9" height="9" fill="none" stroke="#000" stroke-dasharray="1 1" stroke-width="1"/><path d="M583.5 257.5 L588.5 262.5 M583.5 257.5 L587 257.5 M583.5 257.5 L583.5 261" stroke="#303030" stroke-width="1" fill="none"/>
<rect x="597" y="252" width="17" height="16" fill="#dccbc3"/>
<rect x="597" y="252" width="17" height="1" fill="#f4ece8"/>
<rect x="597" y="252" width="1" height="16" fill="#f4ece8"/>
<rect x="597" y="267" width="17" height="1" fill="#3c302c"/>
<rect x="613" y="252" width="1" height="16" fill="#3c302c"/>
<rect x="598" y="266" width="15" height="1" fill="#9a8a84"/>
<rect x="612" y="253" width="1" height="14" fill="#9a8a84"/>
<text x="605.5" y="263" font-size="11" fill="#000" text-anchor="middle">&gt;</text>
<rect x="616" y="252" width="20" height="16" fill="#dccbc3"/>
<rect x="616" y="252" width="20" height="1" fill="#f4ece8"/>
<rect x="616" y="252" width="1" height="16" fill="#f4ece8"/>
<rect x="616" y="267" width="20" height="1" fill="#3c302c"/>
<rect x="635" y="252" width="1" height="16" fill="#3c302c"/>
<rect x="617" y="266" width="18" height="1" fill="#9a8a84"/>
<rect x="634" y="253" width="1" height="14" fill="#9a8a84"/>
<text x="626.0" y="263" font-size="11" fill="#000" text-anchor="middle">&gt;&gt;</text>
<rect x="643" y="252" width="126" height="16" fill="#000"/>
<text x="705.5" y="263.5" font-size="12" fill="#f4f45c" text-anchor="middle" textLength="99" lengthAdjust="spacingAndGlyphs">125,2 dB / 22,4 Hz</text>
<rect x="174" y="40" width="32" height="1" fill="#7c7c7c"/>
<rect x="174" y="40" width="1" height="38" fill="#7c7c7c"/>
<rect x="175" y="41" width="1" height="36" fill="#a0a0a0"/>
<rect x="174" y="78" width="32" height="1" fill="#ffffff"/>
<rect x="175" y="77" width="31" height="1" fill="#e8e8e8"/>
<rect x="205" y="40" width="1" height="4" fill="#ffffff"/>
<path d="M205.5 43.5 L200.5 48.5" stroke="#ffffff" stroke-width="1" fill="none" shape-rendering="crispEdges"/>
<rect x="192" y="45" width="7" height="1" fill="#ffffff"/>
<rect x="192" y="45" width="1" height="16" fill="#ffffff"/>
<rect x="193" y="60" width="6" height="1" fill="#7c7c7c"/>
<rect x="198" y="46" width="1" height="15" fill="#7c7c7c"/>
<rect x="199" y="48" width="1" height="9" fill="#ffffff"/>
<path d="M200.5 56.5 L205.5 61.5" stroke="#7c7c7c" stroke-width="1" fill="none" shape-rendering="crispEdges"/>
<rect x="205" y="62" width="1" height="4" fill="#ffffff"/>
<rect x="194" y="65" width="12" height="1" fill="#ffffff"/>
<rect x="194" y="65" width="1" height="8" fill="#ffffff"/>
<rect x="195" y="67" width="1" height="1" fill="#e8e8e8"/>
<rect x="195" y="71" width="1" height="1" fill="#7c7c7c"/>
<rect x="197" y="67" width="1" height="1" fill="#e8e8e8"/>
<rect x="197" y="71" width="1" height="1" fill="#7c7c7c"/>
<rect x="199" y="67" width="1" height="1" fill="#e8e8e8"/>
<rect x="199" y="71" width="1" height="1" fill="#7c7c7c"/>
<rect x="201" y="67" width="1" height="1" fill="#e8e8e8"/>
<rect x="201" y="71" width="1" height="1" fill="#7c7c7c"/>
<rect x="203" y="67" width="1" height="1" fill="#e8e8e8"/>
<rect x="203" y="71" width="1" height="1" fill="#7c7c7c"/>
<rect x="205" y="67" width="1" height="1" fill="#e8e8e8"/>
<rect x="205" y="71" width="1" height="1" fill="#7c7c7c"/>
<rect x="195" y="72" width="11" height="1" fill="#7c7c7c"/>
<rect x="205" y="73" width="1" height="6" fill="#ffffff"/>
<rect x="427" y="40" width="40" height="1" fill="#7c7c7c"/>
<rect x="427" y="40" width="1" height="17" fill="#7c7c7c"/>
<rect x="427" y="59" width="1" height="19" fill="#7c7c7c"/>
<rect x="427" y="78" width="41" height="1" fill="#ffffff"/>
<rect x="428" y="77" width="39" height="1" fill="#e8e8e8"/>
<rect x="466" y="40" width="1" height="5" fill="#ffffff"/>
<rect x="455" y="44" width="12" height="1" fill="#ffffff"/>
<rect x="455" y="44" width="1" height="9" fill="#ffffff"/>
<rect x="456" y="46" width="1" height="1" fill="#e8e8e8"/>
<rect x="456" y="51" width="1" height="1" fill="#7c7c7c"/>
<rect x="458" y="46" width="1" height="1" fill="#e8e8e8"/>
<rect x="458" y="51" width="1" height="1" fill="#7c7c7c"/>
<rect x="460" y="46" width="1" height="1" fill="#e8e8e8"/>
<rect x="460" y="51" width="1" height="1" fill="#7c7c7c"/>
<rect x="462" y="46" width="1" height="1" fill="#e8e8e8"/>
<rect x="462" y="51" width="1" height="1" fill="#7c7c7c"/>
<rect x="464" y="46" width="1" height="1" fill="#e8e8e8"/>
<rect x="464" y="51" width="1" height="1" fill="#7c7c7c"/>
<rect x="466" y="46" width="1" height="1" fill="#e8e8e8"/>
<rect x="466" y="51" width="1" height="1" fill="#7c7c7c"/>
<rect x="456" y="52" width="12" height="1" fill="#7c7c7c"/>
<rect x="466" y="53" width="1" height="26" fill="#ffffff"/>
<rect x="428" y="57" width="10" height="1" fill="#ffffff"/>
<rect x="428" y="59" width="10" height="1" fill="#7c7c7c"/>
<path d="M437.5 57.5 L444.5 64.5" stroke="#ffffff" stroke-width="1" fill="none" shape-rendering="crispEdges"/>
<path d="M449.5 65.5 L455.5 59.5" stroke="#7c7c7c" stroke-width="1" fill="none" shape-rendering="crispEdges"/>
<rect x="438" y="57" width="1" height="1" fill="#ffffff"/>
<rect x="440" y="57" width="1" height="1" fill="#ffffff"/>
<rect x="442" y="57" width="1" height="1" fill="#ffffff"/>
<rect x="444" y="57" width="1" height="1" fill="#ffffff"/>
<rect x="446" y="57" width="1" height="1" fill="#ffffff"/>
<rect x="448" y="57" width="1" height="1" fill="#ffffff"/>
<rect x="450" y="57" width="1" height="1" fill="#ffffff"/>
<rect x="452" y="57" width="1" height="1" fill="#ffffff"/>
<rect x="454" y="57" width="1" height="1" fill="#ffffff"/>
<rect x="456" y="57" width="11" height="1" fill="#ffffff"/>
<rect x="456" y="59" width="11" height="1" fill="#7c7c7c"/>
<rect x="445" y="65" width="4" height="1" fill="#7c7c7c"/>
<rect x="441" y="66" width="13" height="1" fill="#ffffff"/>
<rect x="441" y="66" width="1" height="6" fill="#ffffff"/>
<rect x="442" y="71" width="12" height="1" fill="#7c7c7c"/>
<rect x="453" y="67" width="1" height="5" fill="#7c7c7c"/>
<rect x="482" y="40" width="29" height="1" fill="#7c7c7c"/>
<rect x="482" y="40" width="1" height="38" fill="#7c7c7c"/>
<rect x="483" y="41" width="1" height="36" fill="#a0a0a0"/>
<rect x="482" y="78" width="30" height="1" fill="#ffffff"/>
<rect x="483" y="77" width="28" height="1" fill="#e8e8e8"/>
<rect x="510" y="40" width="1" height="4" fill="#ffffff"/>
<path d="M510.5 43.5 L505.5 48.5" stroke="#ffffff" stroke-width="1" fill="none" shape-rendering="crispEdges"/>
<rect x="498" y="44" width="6" height="1" fill="#ffffff"/>
<rect x="498" y="44" width="1" height="12" fill="#ffffff"/>
<rect x="499" y="55" width="5" height="1" fill="#7c7c7c"/>
<rect x="503" y="45" width="1" height="11" fill="#7c7c7c"/>
<rect x="504" y="48" width="1" height="4" fill="#ffffff"/>
<path d="M505.5 51.5 L510.5 56.5" stroke="#7c7c7c" stroke-width="1" fill="none" shape-rendering="crispEdges"/>
<path d="M510.5 57.5 L505.5 62.5" stroke="#ffffff" stroke-width="1" fill="none" shape-rendering="crispEdges"/>
<rect x="504" y="63" width="1" height="9" fill="#ffffff"/>
<path d="M505.5 71.5 L510.5 76.5" stroke="#7c7c7c" stroke-width="1" fill="none" shape-rendering="crispEdges"/>
<rect x="608" y="40" width="32" height="1" fill="#7c7c7c"/>
<rect x="608" y="40" width="1" height="38" fill="#7c7c7c"/>
<rect x="609" y="41" width="1" height="36" fill="#a0a0a0"/>
<rect x="608" y="78" width="33" height="1" fill="#ffffff"/>
<rect x="609" y="77" width="31" height="1" fill="#e8e8e8"/>
<rect x="639" y="40" width="1" height="4" fill="#ffffff"/>
<path d="M639.5 43.5 L634.5 48.5" stroke="#ffffff" stroke-width="1" fill="none" shape-rendering="crispEdges"/>
<rect x="626" y="47" width="7" height="1" fill="#ffffff"/>
<rect x="626" y="47" width="1" height="17" fill="#ffffff"/>
<rect x="627" y="63" width="6" height="1" fill="#7c7c7c"/>
<rect x="632" y="48" width="1" height="16" fill="#7c7c7c"/>
<rect x="633" y="48" width="1" height="11" fill="#ffffff"/>
<path d="M634.5 59.5 L639.5 64.5" stroke="#7c7c7c" stroke-width="1" fill="none" shape-rendering="crispEdges"/>
<rect x="639" y="65" width="1" height="14" fill="#ffffff"/>
<rect x="806" y="40" width="7" height="1" fill="#ffffff"/>
<rect x="806" y="40" width="1" height="30" fill="#ffffff"/>
<rect x="807" y="69" width="6" height="1" fill="#7c7c7c"/>
<rect x="812" y="41" width="1" height="29" fill="#7c7c7c"/>
<rect x="809" y="42" width="3" height="1" fill="#7c7c7c"/>
<rect x="809" y="45" width="3" height="1" fill="#7c7c7c"/>
<rect x="809" y="48" width="3" height="1" fill="#7c7c7c"/>
<rect x="809" y="51" width="3" height="1" fill="#7c7c7c"/>
<rect x="809" y="54" width="3" height="1" fill="#7c7c7c"/>
<rect x="809" y="57" width="3" height="1" fill="#7c7c7c"/>
<rect x="809" y="60" width="3" height="1" fill="#7c7c7c"/>
<rect x="809" y="63" width="3" height="1" fill="#7c7c7c"/>
<rect x="809" y="66" width="3" height="1" fill="#7c7c7c"/>
<rect x="816" y="72" width="25" height="1" fill="#ffffff"/>
<rect x="816" y="72" width="1" height="7" fill="#ffffff"/>
<rect x="817" y="78" width="24" height="1" fill="#7c7c7c"/>
<rect x="840" y="73" width="1" height="6" fill="#7c7c7c"/>
<rect x="818" y="74" width="1" height="3" fill="#7c7c7c"/>
<rect x="821" y="74" width="1" height="3" fill="#7c7c7c"/>
<rect x="824" y="74" width="1" height="3" fill="#7c7c7c"/>
<rect x="827" y="74" width="1" height="3" fill="#7c7c7c"/>
<rect x="830" y="74" width="1" height="3" fill="#7c7c7c"/>
<rect x="833" y="74" width="1" height="3" fill="#7c7c7c"/>
<rect x="836" y="74" width="1" height="3" fill="#7c7c7c"/>
<rect x="816" y="46" width="18" height="1" fill="#7c7c7c"/>
<rect x="816" y="69" width="18" height="1" fill="#7c7c7c"/>
<rect x="816" y="46" width="1" height="24" fill="#7c7c7c"/>
<rect x="833" y="46" width="1" height="24" fill="#7c7c7c"/>
<rect x="822" y="40" width="18" height="1" fill="#7c7c7c"/>
<rect x="839" y="40" width="1" height="24" fill="#7c7c7c"/>
<path d="M816.5 46.5 L822.5 40.5" stroke="#7c7c7c" stroke-width="1" fill="none" shape-rendering="crispEdges"/>
<path d="M833.5 46.5 L839.5 40.5" stroke="#7c7c7c" stroke-width="1" fill="none" shape-rendering="crispEdges"/>
<path d="M833.5 69.5 L839.5 63.5" stroke="#7c7c7c" stroke-width="1" fill="none" shape-rendering="crispEdges"/>
<rect x="822" y="42" width="1" height="1" fill="#7c7c7c"/>
<rect x="822" y="45" width="1" height="1" fill="#7c7c7c"/>
<rect x="822" y="48" width="1" height="1" fill="#7c7c7c"/>
<rect x="822" y="51" width="1" height="1" fill="#7c7c7c"/>
<rect x="822" y="54" width="1" height="1" fill="#7c7c7c"/>
<rect x="822" y="57" width="1" height="1" fill="#7c7c7c"/>
<rect x="822" y="60" width="1" height="1" fill="#7c7c7c"/>
<rect x="822" y="63" width="1" height="1" fill="#7c7c7c"/>
<rect x="825" y="63" width="1" height="1" fill="#7c7c7c"/>
<rect x="828" y="63" width="1" height="1" fill="#7c7c7c"/>
<rect x="831" y="63" width="1" height="1" fill="#7c7c7c"/>
<rect x="834" y="63" width="1" height="1" fill="#7c7c7c"/>
<rect x="837" y="63" width="1" height="1" fill="#7c7c7c"/>
<rect x="818" y="67" width="1" height="1" fill="#7c7c7c"/>
<rect x="820" y="65" width="1" height="1" fill="#7c7c7c"/>
<rect x="1" y="275" width="502" height="1" fill="#000"/>
<rect x="1" y="512" width="502" height="1" fill="#000"/>
<rect x="1" y="275" width="1" height="238" fill="#000"/>
<rect x="502" y="275" width="1" height="238" fill="#000"/>
<rect x="2" y="276" width="499" height="235" fill="#808080"/>
<rect x="1" y="511" width="502" height="1" fill="#000"/>
<rect x="501" y="275" width="1" height="238" fill="#000"/>
<rect x="2" y="276" width="500" height="1" fill="#d8d8d8"/>
<rect x="2" y="276" width="1" height="235" fill="#d8d8d8"/>
<rect x="3" y="277" width="499" height="1" fill="#b4b4b4"/>
<rect x="3" y="277" width="1" height="234" fill="#b4b4b4"/>
<rect x="8" y="283" width="38" height="16" fill="#dccbc3"/>
<rect x="8" y="283" width="38" height="1" fill="#f4ece8"/>
<rect x="8" y="283" width="1" height="16" fill="#f4ece8"/>
<rect x="8" y="298" width="38" height="1" fill="#3c302c"/>
<rect x="45" y="283" width="1" height="16" fill="#3c302c"/>
<rect x="9" y="297" width="36" height="1" fill="#9a8a84"/>
<rect x="44" y="284" width="1" height="14" fill="#9a8a84"/>
<text x="27.0" y="294" font-size="11" fill="#000" text-anchor="middle" textLength="25" lengthAdjust="spacingAndGlyphs">Clear</text>
<rect x="49" y="283" width="43" height="16" fill="#dccbc3"/>
<rect x="49" y="283" width="43" height="1" fill="#f4ece8"/>
<rect x="49" y="283" width="1" height="16" fill="#f4ece8"/>
<rect x="49" y="298" width="43" height="1" fill="#3c302c"/>
<rect x="91" y="283" width="1" height="16" fill="#3c302c"/>
<rect x="50" y="297" width="41" height="1" fill="#9a8a84"/>
<rect x="90" y="284" width="1" height="14" fill="#9a8a84"/>
<text x="70.5" y="294" font-size="11" fill="#000" text-anchor="middle" textLength="32" lengthAdjust="spacingAndGlyphs">Cursor</text>
<text x="255" y="298" font-size="12" fill="#000" font-weight="bold" text-anchor="middle" textLength="227" lengthAdjust="spacingAndGlyphs">Normalized Amplitude Response (dB/Hz)</text>
<text x="254" y="297" font-size="12" fill="#fff" font-weight="bold" text-anchor="middle" textLength="227" lengthAdjust="spacingAndGlyphs">Normalized Amplitude Response (dB/Hz)</text>
<rect x="36" y="309" width="458" height="179" fill="#000"/>
<defs><clipPath id="c1_275"><rect x="36" y="309" width="458" height="179"/></clipPath></defs>
<rect x="49" y="309" width="1" height="179" fill="#9c9c9c"/>
<rect x="61" y="309" width="1" height="179" fill="#9c9c9c"/>
<rect x="71" y="309" width="1" height="179" fill="#9c9c9c"/>
<rect x="80" y="309" width="1" height="179" fill="#9c9c9c"/>
<rect x="88" y="309" width="1" height="179" fill="#9c9c9c"/>
<rect x="141" y="309" width="1" height="179" fill="#9c9c9c"/>
<rect x="172" y="309" width="1" height="179" fill="#9c9c9c"/>
<rect x="194" y="309" width="1" height="179" fill="#9c9c9c"/>
<rect x="212" y="309" width="1" height="179" fill="#9c9c9c"/>
<rect x="226" y="309" width="1" height="179" fill="#9c9c9c"/>
<rect x="237" y="309" width="1" height="179" fill="#9c9c9c"/>
<rect x="248" y="309" width="1" height="179" fill="#9c9c9c"/>
<rect x="257" y="309" width="1" height="179" fill="#9c9c9c"/>
<rect x="265" y="309" width="1" height="179" fill="#9c9c9c"/>
<rect x="318" y="309" width="1" height="179" fill="#9c9c9c"/>
<rect x="349" y="309" width="1" height="179" fill="#9c9c9c"/>
<rect x="371" y="309" width="1" height="179" fill="#9c9c9c"/>
<rect x="388" y="309" width="1" height="179" fill="#9c9c9c"/>
<rect x="402" y="309" width="1" height="179" fill="#9c9c9c"/>
<rect x="414" y="309" width="1" height="179" fill="#9c9c9c"/>
<rect x="424" y="309" width="1" height="179" fill="#9c9c9c"/>
<rect x="433" y="309" width="1" height="179" fill="#9c9c9c"/>
<rect x="441" y="309" width="1" height="179" fill="#9c9c9c"/>
<rect x="36" y="318" width="458" height="1" fill="#9c9c9c"/>
<rect x="36" y="328" width="458" height="1" fill="#9c9c9c"/>
<rect x="36" y="338" width="458" height="1" fill="#9c9c9c"/>
<rect x="36" y="348" width="458" height="1" fill="#9c9c9c"/>
<rect x="36" y="358" width="458" height="1" fill="#9c9c9c"/>
<rect x="36" y="368" width="458" height="1" fill="#9c9c9c"/>
<rect x="36" y="378" width="458" height="1" fill="#9c9c9c"/>
<rect x="36" y="388" width="458" height="1" fill="#9c9c9c"/>
<rect x="36" y="398" width="458" height="1" fill="#9c9c9c"/>
<rect x="36" y="408" width="458" height="1" fill="#9c9c9c"/>
<rect x="36" y="418" width="458" height="1" fill="#9c9c9c"/>
<rect x="36" y="428" width="458" height="1" fill="#9c9c9c"/>
<rect x="36" y="438" width="458" height="1" fill="#9c9c9c"/>
<rect x="36" y="448" width="458" height="1" fill="#9c9c9c"/>
<rect x="36" y="458" width="458" height="1" fill="#9c9c9c"/>
<rect x="36" y="468" width="458" height="1" fill="#9c9c9c"/>
<rect x="36" y="478" width="458" height="1" fill="#9c9c9c"/>
<rect x="34" y="307" width="462" height="2" fill="#d4d4d4"/>
<rect x="34" y="488" width="462" height="2" fill="#d4d4d4"/>
<rect x="34" y="307" width="2" height="183" fill="#d4d4d4"/>
<rect x="494" y="307" width="2" height="183" fill="#d4d4d4"/>
<rect x="35" y="490" width="1" height="3" fill="#e0e0e0"/>
<rect x="49" y="490" width="1" height="3" fill="#e0e0e0"/>
<rect x="61" y="490" width="1" height="3" fill="#e0e0e0"/>
<rect x="71" y="490" width="1" height="3" fill="#e0e0e0"/>
<rect x="80" y="490" width="1" height="3" fill="#e0e0e0"/>
<rect x="88" y="490" width="1" height="3" fill="#e0e0e0"/>
<rect x="141" y="490" width="1" height="3" fill="#e0e0e0"/>
<rect x="172" y="490" width="1" height="3" fill="#e0e0e0"/>
<rect x="194" y="490" width="1" height="3" fill="#e0e0e0"/>
<rect x="212" y="490" width="1" height="3" fill="#e0e0e0"/>
<rect x="226" y="490" width="1" height="3" fill="#e0e0e0"/>
<rect x="237" y="490" width="1" height="3" fill="#e0e0e0"/>
<rect x="248" y="490" width="1" height="3" fill="#e0e0e0"/>
<rect x="257" y="490" width="1" height="3" fill="#e0e0e0"/>
<rect x="265" y="490" width="1" height="3" fill="#e0e0e0"/>
<rect x="318" y="490" width="1" height="3" fill="#e0e0e0"/>
<rect x="349" y="490" width="1" height="3" fill="#e0e0e0"/>
<rect x="371" y="490" width="1" height="3" fill="#e0e0e0"/>
<rect x="388" y="490" width="1" height="3" fill="#e0e0e0"/>
<rect x="402" y="490" width="1" height="3" fill="#e0e0e0"/>
<rect x="414" y="490" width="1" height="3" fill="#e0e0e0"/>
<rect x="424" y="490" width="1" height="3" fill="#e0e0e0"/>
<rect x="433" y="490" width="1" height="3" fill="#e0e0e0"/>
<rect x="441" y="490" width="1" height="3" fill="#e0e0e0"/>
<rect x="494" y="490" width="1" height="3" fill="#e0e0e0"/>
<rect x="496" y="318" width="3" height="1" fill="#e0e0e0"/>
<rect x="31" y="318" width="3" height="1" fill="#e0e0e0"/>
<text x="28" y="323" font-size="12" fill="#f4f4f4" text-anchor="end" letter-spacing="0.3">dB</text>
<rect x="496" y="338" width="3" height="1" fill="#e0e0e0"/>
<rect x="31" y="338" width="3" height="1" fill="#e0e0e0"/>
<text x="28" y="343" font-size="12" fill="#f4f4f4" text-anchor="end" letter-spacing="0.3">6</text>
<rect x="496" y="358" width="3" height="1" fill="#e0e0e0"/>
<rect x="31" y="358" width="3" height="1" fill="#e0e0e0"/>
<text x="28" y="363" font-size="12" fill="#f4f4f4" text-anchor="end" letter-spacing="0.3">0</text>
<rect x="496" y="378" width="3" height="1" fill="#e0e0e0"/>
<rect x="31" y="378" width="3" height="1" fill="#e0e0e0"/>
<text x="28" y="383" font-size="12" fill="#f4f4f4" text-anchor="end" letter-spacing="0.3">-6</text>
<rect x="496" y="398" width="3" height="1" fill="#e0e0e0"/>
<rect x="31" y="398" width="3" height="1" fill="#e0e0e0"/>
<text x="28" y="403" font-size="12" fill="#f4f4f4" text-anchor="end" letter-spacing="0.3">-12</text>
<rect x="496" y="418" width="3" height="1" fill="#e0e0e0"/>
<rect x="31" y="418" width="3" height="1" fill="#e0e0e0"/>
<text x="28" y="423" font-size="12" fill="#f4f4f4" text-anchor="end" letter-spacing="0.3">-18</text>
<rect x="496" y="438" width="3" height="1" fill="#e0e0e0"/>
<rect x="31" y="438" width="3" height="1" fill="#e0e0e0"/>
<text x="28" y="443" font-size="12" fill="#f4f4f4" text-anchor="end" letter-spacing="0.3">-24</text>
<rect x="496" y="458" width="3" height="1" fill="#e0e0e0"/>
<rect x="31" y="458" width="3" height="1" fill="#e0e0e0"/>
<text x="28" y="463" font-size="12" fill="#f4f4f4" text-anchor="end" letter-spacing="0.3">-30</text>
<rect x="496" y="478" width="3" height="1" fill="#e0e0e0"/>
<rect x="31" y="478" width="3" height="1" fill="#e0e0e0"/>
<text x="28" y="483" font-size="12" fill="#f4f4f4" text-anchor="end" letter-spacing="0.3">-36</text>
<text x="33" y="506" font-size="12" fill="#f4f4f4" letter-spacing="0.3">5 Hz</text>
<text x="88.73824788488781" y="506" font-size="12" fill="#f4f4f4" text-anchor="middle" letter-spacing="0.3">10</text>
<text x="212.07500000000002" y="506" font-size="12" fill="#f4f4f4" text-anchor="middle" letter-spacing="0.3">50</text>
<text x="265.1932478848878" y="506" font-size="12" fill="#f4f4f4" text-anchor="middle" letter-spacing="0.3">100</text>
<text x="388.53000000000003" y="506" font-size="12" fill="#f4f4f4" text-anchor="middle" letter-spacing="0.3">500</text>
<text x="441.64824788488784" y="506" font-size="12" fill="#f4f4f4" text-anchor="middle" letter-spacing="0.3">1000</text>
<text x="497" y="506" font-size="12" fill="#f4f4f4" text-anchor="end" letter-spacing="0.3">2000</text>
<rect x="36" y="358" width="458" height="1" fill="#e4e4e4"/>
<path d="M458.5 296.5 L458.5 291.5 L465.5 290.5 L467.5 288.5 L473.5 288.5 L476.5 291.5 L478.5 292.5 L478.5 296.5 Z" fill="#d4d4d4" stroke="#fff" stroke-width="1" shape-rendering="crispEdges"/>
<rect x="479" y="292" width="1" height="6" fill="#000"/>
<rect x="460" y="297" width="20" height="1" fill="#000"/>
<rect x="466" y="290" width="2" height="4" fill="#8c8c8c"/>
<rect x="469" y="290" width="3" height="1" fill="#8c8c8c"/>
<rect x="471" y="290" width="1" height="4" fill="#8c8c8c"/>
<rect x="469" y="293" width="3" height="1" fill="#8c8c8c"/>
<rect x="461" y="295" width="3" height="3" fill="#000"/>
<rect x="473" y="295" width="3" height="3" fill="#000"/>
<rect x="476" y="289" width="1" height="2" fill="#000"/>
<rect x="482" y="286" width="14" height="14" fill="#e6d8d2"/>
<rect x="484" y="288" width="10" height="10" fill="#fff"/>
<rect x="483" y="287" width="11" height="1" fill="#3c2c28"/>
<rect x="483" y="287" width="1" height="11" fill="#3c2c28"/>
<rect x="483" y="298" width="12" height="1" fill="#f4ece8"/>
<rect x="494" y="287" width="1" height="12" fill="#f4ece8"/>
<path d="M35.30 479.00 L39.85 475.54 L46.41 470.56 L53.58 465.16 L60.00 460.50 L65.31 456.91 L70.25 453.77 L75.04 450.77 L79.90 447.60 L84.97 444.20 L90.09 440.73 L95.10 437.19 L99.80 433.60 L103.84 429.99 L107.42 426.33 L111.20 422.59 L115.80 418.70 L121.77 414.48 L128.63 410.01 L135.56 405.66 L141.70 401.80 L146.69 398.64 L151.02 395.93 L155.17 393.41 L159.60 390.80 L164.52 387.96 L169.64 385.07 L174.72 382.29 L179.50 379.80 L183.86 377.67 L187.96 375.81 L191.92 374.11 L195.90 372.50 L199.89 370.95 L203.83 369.51 L207.76 368.19 L211.70 367.00 L215.73 365.98 L219.80 365.10 L223.80 364.30 L227.60 363.50 L231.44 362.62 L235.29 361.73 L238.65 360.95 L241.00 360.40" stroke="#c83cc8" stroke-width="1.0" fill="none" shape-rendering="crispEdges" stroke-linejoin="round" clip-path="url(#c1_275)"/>
<rect x="241" y="360" width="31" height="1" fill="#c83cc8"/>
<path d="M71.60 488.50 L73.20 485.31 L75.50 480.71 L78.05 475.68 L80.40 471.20 L82.51 467.39 L84.59 463.77 L86.57 460.42 L88.40 457.40 L90.00 454.88 L91.44 452.77 L92.80 450.78 L94.20 448.60 L95.63 446.15 L97.05 443.59 L98.49 440.98 L100.00 438.40 L101.59 435.91 L103.25 433.45 L104.93 430.92 L106.60 428.20 L108.29 425.08 L109.99 421.68 L111.66 418.39 L113.20 415.60 L114.53 413.59 L115.71 412.09 L116.91 410.68 L118.30 408.90 L119.93 406.62 L121.70 404.07 L123.57 401.41 L125.50 398.80 L127.50 396.18 L129.58 393.51 L131.70 390.93 L133.80 388.60 L135.85 386.54 L137.88 384.68 L139.94 383.00 L142.10 381.50 L144.33 380.26 L146.62 379.25 L149.03 378.32 L151.60 377.30 L154.46 376.16 L157.55 374.99 L160.64 373.79 L163.50 372.60 L166.02 371.38 L168.32 370.13 L170.60 368.91 L173.00 367.80 L175.56 366.82 L178.20 365.94 L180.91 365.11 L183.70 364.30 L186.65 363.50 L189.72 362.73 L192.77 362.00 L195.60 361.30 L198.17 360.61 L200.57 359.94 L202.87 359.35 L205.10 358.90 L207.45 358.65 L209.84 358.55 L211.94 358.52 L213.40 358.50" stroke="#48d4d0" stroke-width="1.0" fill="none" shape-rendering="crispEdges" stroke-linejoin="round" clip-path="url(#c1_275)"/>
<rect x="205" y="358" width="289" height="1" fill="#48d4d0"/>
<rect x="205" y="357" width="9" height="1" fill="#48d4d0"/>
<rect x="241" y="357" width="27" height="1" fill="#48d4d0"/>
<rect x="272" y="358" width="40" height="2" fill="#7a7af4"/>
<rect x="504" y="275" width="502" height="1" fill="#000"/>
<rect x="504" y="512" width="502" height="1" fill="#000"/>
<rect x="504" y="275" width="1" height="238" fill="#000"/>
<rect x="1005" y="275" width="1" height="238" fill="#000"/>
<rect x="505" y="276" width="499" height="235" fill="#808080"/>
<rect x="504" y="511" width="502" height="1" fill="#000"/>
<rect x="1004" y="275" width="1" height="238" fill="#000"/>
<rect x="505" y="276" width="500" height="1" fill="#d8d8d8"/>
<rect x="505" y="276" width="1" height="235" fill="#d8d8d8"/>
<rect x="506" y="277" width="499" height="1" fill="#b4b4b4"/>
<rect x="506" y="277" width="1" height="234" fill="#b4b4b4"/>
<rect x="511" y="283" width="38" height="16" fill="#dccbc3"/>
<rect x="511" y="283" width="38" height="1" fill="#f4ece8"/>
<rect x="511" y="283" width="1" height="16" fill="#f4ece8"/>
<rect x="511" y="298" width="38" height="1" fill="#3c302c"/>
<rect x="548" y="283" width="1" height="16" fill="#3c302c"/>
<rect x="512" y="297" width="36" height="1" fill="#9a8a84"/>
<rect x="547" y="284" width="1" height="14" fill="#9a8a84"/>
<text x="530.0" y="294" font-size="11" fill="#000" text-anchor="middle" textLength="25" lengthAdjust="spacingAndGlyphs">Clear</text>
<rect x="552" y="283" width="43" height="16" fill="#dccbc3"/>
<rect x="552" y="283" width="43" height="1" fill="#000"/>
<rect x="552" y="298" width="43" height="1" fill="#000"/>
<rect x="552" y="283" width="1" height="16" fill="#000"/>
<rect x="594" y="283" width="1" height="16" fill="#000"/>
<rect x="553" y="284" width="41" height="1" fill="#3c302c"/>
<rect x="553" y="284" width="1" height="14" fill="#3c302c"/>
<rect x="553" y="297" width="41" height="1" fill="#f4ece8"/>
<rect x="593" y="284" width="1" height="14" fill="#f4ece8"/>
<text x="573.5" y="294" font-size="11" fill="#000" text-anchor="middle" textLength="32" lengthAdjust="spacingAndGlyphs">Cursor</text>
<text x="757" y="298" font-size="12" fill="#000" font-weight="bold" text-anchor="middle" textLength="186" lengthAdjust="spacingAndGlyphs">Impedance Response (Ohms/Hz)</text>
<text x="756" y="297" font-size="12" fill="#fff" font-weight="bold" text-anchor="middle" textLength="186" lengthAdjust="spacingAndGlyphs">Impedance Response (Ohms/Hz)</text>
<rect x="539" y="309" width="458" height="179" fill="#000"/>
<defs><clipPath id="c504_275"><rect x="539" y="309" width="458" height="179"/></clipPath></defs>
<rect x="552" y="309" width="1" height="179" fill="#9c9c9c"/>
<rect x="564" y="309" width="1" height="179" fill="#9c9c9c"/>
<rect x="574" y="309" width="1" height="179" fill="#9c9c9c"/>
<rect x="583" y="309" width="1" height="179" fill="#9c9c9c"/>
<rect x="591" y="309" width="1" height="179" fill="#9c9c9c"/>
<rect x="644" y="309" width="1" height="179" fill="#9c9c9c"/>
<rect x="675" y="309" width="1" height="179" fill="#9c9c9c"/>
<rect x="697" y="309" width="1" height="179" fill="#9c9c9c"/>
<rect x="715" y="309" width="1" height="179" fill="#9c9c9c"/>
<rect x="729" y="309" width="1" height="179" fill="#9c9c9c"/>
<rect x="740" y="309" width="1" height="179" fill="#9c9c9c"/>
<rect x="751" y="309" width="1" height="179" fill="#9c9c9c"/>
<rect x="760" y="309" width="1" height="179" fill="#9c9c9c"/>
<rect x="768" y="309" width="1" height="179" fill="#9c9c9c"/>
<rect x="821" y="309" width="1" height="179" fill="#9c9c9c"/>
<rect x="852" y="309" width="1" height="179" fill="#9c9c9c"/>
<rect x="874" y="309" width="1" height="179" fill="#9c9c9c"/>
<rect x="891" y="309" width="1" height="179" fill="#9c9c9c"/>
<rect x="905" y="309" width="1" height="179" fill="#9c9c9c"/>
<rect x="917" y="309" width="1" height="179" fill="#9c9c9c"/>
<rect x="927" y="309" width="1" height="179" fill="#9c9c9c"/>
<rect x="936" y="309" width="1" height="179" fill="#9c9c9c"/>
<rect x="944" y="309" width="1" height="179" fill="#9c9c9c"/>
<rect x="539" y="312" width="458" height="1" fill="#9c9c9c"/>
<rect x="539" y="328" width="458" height="1" fill="#9c9c9c"/>
<rect x="539" y="344" width="458" height="1" fill="#9c9c9c"/>
<rect x="539" y="360" width="458" height="1" fill="#9c9c9c"/>
<rect x="539" y="376" width="458" height="1" fill="#9c9c9c"/>
<rect x="539" y="392" width="458" height="1" fill="#9c9c9c"/>
<rect x="539" y="408" width="458" height="1" fill="#9c9c9c"/>
<rect x="539" y="424" width="458" height="1" fill="#9c9c9c"/>
<rect x="539" y="440" width="458" height="1" fill="#9c9c9c"/>
<rect x="539" y="456" width="458" height="1" fill="#9c9c9c"/>
<rect x="539" y="472" width="458" height="1" fill="#9c9c9c"/>
<rect x="537" y="307" width="462" height="2" fill="#d4d4d4"/>
<rect x="537" y="488" width="462" height="2" fill="#d4d4d4"/>
<rect x="537" y="307" width="2" height="183" fill="#d4d4d4"/>
<rect x="997" y="307" width="2" height="183" fill="#d4d4d4"/>
<rect x="538" y="490" width="1" height="3" fill="#e0e0e0"/>
<rect x="552" y="490" width="1" height="3" fill="#e0e0e0"/>
<rect x="564" y="490" width="1" height="3" fill="#e0e0e0"/>
<rect x="574" y="490" width="1" height="3" fill="#e0e0e0"/>
<rect x="583" y="490" width="1" height="3" fill="#e0e0e0"/>
<rect x="591" y="490" width="1" height="3" fill="#e0e0e0"/>
<rect x="644" y="490" width="1" height="3" fill="#e0e0e0"/>
<rect x="675" y="490" width="1" height="3" fill="#e0e0e0"/>
<rect x="697" y="490" width="1" height="3" fill="#e0e0e0"/>
<rect x="715" y="490" width="1" height="3" fill="#e0e0e0"/>
<rect x="729" y="490" width="1" height="3" fill="#e0e0e0"/>
<rect x="740" y="490" width="1" height="3" fill="#e0e0e0"/>
<rect x="751" y="490" width="1" height="3" fill="#e0e0e0"/>
<rect x="760" y="490" width="1" height="3" fill="#e0e0e0"/>
<rect x="768" y="490" width="1" height="3" fill="#e0e0e0"/>
<rect x="821" y="490" width="1" height="3" fill="#e0e0e0"/>
<rect x="852" y="490" width="1" height="3" fill="#e0e0e0"/>
<rect x="874" y="490" width="1" height="3" fill="#e0e0e0"/>
<rect x="891" y="490" width="1" height="3" fill="#e0e0e0"/>
<rect x="905" y="490" width="1" height="3" fill="#e0e0e0"/>
<rect x="917" y="490" width="1" height="3" fill="#e0e0e0"/>
<rect x="927" y="490" width="1" height="3" fill="#e0e0e0"/>
<rect x="936" y="490" width="1" height="3" fill="#e0e0e0"/>
<rect x="944" y="490" width="1" height="3" fill="#e0e0e0"/>
<rect x="997" y="490" width="1" height="3" fill="#e0e0e0"/>
<rect x="999" y="312" width="3" height="1" fill="#e0e0e0"/>
<rect x="534" y="312" width="3" height="1" fill="#e0e0e0"/>
<text x="531" y="317" font-size="12" fill="#f4f4f4" font-weight="bold" text-anchor="end">Ω</text>
<rect x="999" y="328" width="3" height="1" fill="#e0e0e0"/>
<rect x="534" y="328" width="3" height="1" fill="#e0e0e0"/>
<text x="531" y="333" font-size="12" fill="#f4f4f4" text-anchor="end" letter-spacing="0.3">100</text>
<rect x="999" y="344" width="3" height="1" fill="#e0e0e0"/>
<rect x="534" y="344" width="3" height="1" fill="#e0e0e0"/>
<text x="531" y="349" font-size="12" fill="#f4f4f4" text-anchor="end" letter-spacing="0.3">90</text>
<rect x="999" y="360" width="3" height="1" fill="#e0e0e0"/>
<rect x="534" y="360" width="3" height="1" fill="#e0e0e0"/>
<text x="531" y="365" font-size="12" fill="#f4f4f4" text-anchor="end" letter-spacing="0.3">80</text>
<rect x="999" y="376" width="3" height="1" fill="#e0e0e0"/>
<rect x="534" y="376" width="3" height="1" fill="#e0e0e0"/>
<text x="531" y="381" font-size="12" fill="#f4f4f4" text-anchor="end" letter-spacing="0.3">70</text>
<rect x="999" y="392" width="3" height="1" fill="#e0e0e0"/>
<rect x="534" y="392" width="3" height="1" fill="#e0e0e0"/>
<text x="531" y="397" font-size="12" fill="#f4f4f4" text-anchor="end" letter-spacing="0.3">60</text>
<rect x="999" y="408" width="3" height="1" fill="#e0e0e0"/>
<rect x="534" y="408" width="3" height="1" fill="#e0e0e0"/>
<text x="531" y="413" font-size="12" fill="#f4f4f4" text-anchor="end" letter-spacing="0.3">50</text>
<rect x="999" y="424" width="3" height="1" fill="#e0e0e0"/>
<rect x="534" y="424" width="3" height="1" fill="#e0e0e0"/>
<text x="531" y="429" font-size="12" fill="#f4f4f4" text-anchor="end" letter-spacing="0.3">40</text>
<rect x="999" y="440" width="3" height="1" fill="#e0e0e0"/>
<rect x="534" y="440" width="3" height="1" fill="#e0e0e0"/>
<text x="531" y="445" font-size="12" fill="#f4f4f4" text-anchor="end" letter-spacing="0.3">30</text>
<rect x="999" y="456" width="3" height="1" fill="#e0e0e0"/>
<rect x="534" y="456" width="3" height="1" fill="#e0e0e0"/>
<text x="531" y="461" font-size="12" fill="#f4f4f4" text-anchor="end" letter-spacing="0.3">20</text>
<rect x="999" y="472" width="3" height="1" fill="#e0e0e0"/>
<rect x="534" y="472" width="3" height="1" fill="#e0e0e0"/>
<text x="531" y="477" font-size="12" fill="#f4f4f4" text-anchor="end" letter-spacing="0.3">10</text>
<rect x="999" y="488" width="3" height="1" fill="#e0e0e0"/>
<rect x="534" y="488" width="3" height="1" fill="#e0e0e0"/>
<text x="531" y="493" font-size="12" fill="#f4f4f4" text-anchor="end" letter-spacing="0.3">0</text>
<text x="536" y="506" font-size="12" fill="#f4f4f4" letter-spacing="0.3">5 Hz</text>
<text x="591.7382478848879" y="506" font-size="12" fill="#f4f4f4" text-anchor="middle" letter-spacing="0.3">10</text>
<text x="715.075" y="506" font-size="12" fill="#f4f4f4" text-anchor="middle" letter-spacing="0.3">50</text>
<text x="768.1932478848878" y="506" font-size="12" fill="#f4f4f4" text-anchor="middle" letter-spacing="0.3">100</text>
<text x="891.53" y="506" font-size="12" fill="#f4f4f4" text-anchor="middle" letter-spacing="0.3">500</text>
<text x="944.6482478848878" y="506" font-size="12" fill="#f4f4f4" text-anchor="middle" letter-spacing="0.3">1000</text>
<text x="1000" y="506" font-size="12" fill="#f4f4f4" text-anchor="end" letter-spacing="0.3">2000</text>
<text x="998" y="290" font-size="11" fill="#38d8e0" text-anchor="end" textLength="86" lengthAdjust="spacingAndGlyphs">Max Z: 71,5 ohms</text>
<text x="998" y="303" font-size="11" fill="#38d8e0" text-anchor="end" textLength="71" lengthAdjust="spacingAndGlyphs">Min Z: 4, ohms</text>
<path d="M539.00 482.80 L544.61 482.83 L552.80 482.88 L561.06 482.88 L566.90 482.80 L568.46 482.58 L567.46 482.27 L566.79 481.93 L569.30 481.60 L576.65 481.30 L587.02 481.01 L598.05 480.71 L607.40 480.40 L614.34 480.10 L620.14 479.81 L625.51 479.46 L631.10 479.00 L637.15 478.42 L643.29 477.76 L649.28 476.99 L654.90 476.10 L660.17 475.11 L665.19 474.02 L669.84 472.79 L674.00 471.40 L677.62 469.91 L680.78 468.32 L683.52 466.47 L685.90 464.20 L687.85 461.39 L689.37 458.16 L690.63 454.67 L691.80 451.10 L692.87 447.30 L693.77 443.25 L694.59 439.27 L695.40 435.70 L696.19 432.14 L696.93 428.57 L697.67 425.89 L698.50 425.00 L699.42 426.52 L700.39 429.84 L701.42 434.02 L702.50 438.10 L703.65 442.17 L704.86 446.63 L706.09 450.97 L707.30 454.70 L708.31 457.66 L709.21 460.11 L710.32 462.24 L712.00 464.20 L714.41 466.03 L717.35 467.65 L720.59 469.04 L723.90 470.20 L727.36 471.02 L731.05 471.53 L734.74 471.96 L738.20 472.50 L741.40 473.25 L744.45 474.09 L747.35 474.90 L750.10 475.60 L752.87 476.16 L755.59 476.64 L757.95 477.03 L759.60 477.30" stroke="#c83cc8" stroke-width="1.0" fill="none" shape-rendering="crispEdges" stroke-linejoin="round" clip-path="url(#c504_275)"/>
<path d="M539.00 481.40 L541.86 481.23 L545.96 480.97 L550.58 480.69 L555.00 480.40 L559.07 480.13 L563.16 479.86 L567.35 479.55 L571.70 479.20 L576.51 478.77 L581.65 478.28 L586.56 477.78 L590.70 477.30 L593.74 476.91 L596.04 476.57 L598.05 476.17 L600.20 475.60 L602.69 474.86 L605.24 473.99 L607.66 472.98 L609.70 471.80 L611.20 470.44 L612.33 468.91 L613.33 467.23 L614.50 465.40 L615.90 462.96 L617.38 460.05 L618.89 457.62 L620.40 456.60 L621.87 457.55 L623.33 459.86 L624.82 462.74 L626.40 465.40 L628.04 467.84 L629.73 470.40 L631.53 472.84 L633.50 474.90 L635.70 476.49 L638.09 477.74 L640.56 478.78 L643.00 479.70 L645.29 480.58 L647.51 481.35 L649.87 481.89 L652.60 482.10 L655.82 481.88 L659.41 481.31 L663.14 480.53 L666.80 479.70 L670.48 478.81 L674.24 477.79 L677.86 476.71 L681.10 475.60 L683.87 474.62 L686.30 473.71 L688.51 472.56 L690.60 470.90 L692.60 468.67 L694.44 466.02 L696.14 462.96 L697.70 459.50 L699.11 455.20 L700.36 450.21 L701.49 445.38 L702.50 441.60 L703.35 438.98 L704.06 437.09 L704.71 435.98 L705.40 435.70 L706.12 436.34 L706.84 437.84 L707.61 440.05 L708.50 442.80 L709.53 446.47 L710.67 451.00 L711.90 455.61 L713.20 459.50 L714.53 462.52 L715.90 465.07 L717.42 467.22 L719.20 469.00 L721.16 470.31 L723.29 471.15 L725.74 471.79 L728.70 472.50 L732.40 473.34 L736.70 474.16 L741.15 474.93 L745.30 475.60 L748.69 476.17 L751.68 476.66 L755.05 477.05 L759.60 477.30 L765.57 477.45 L772.54 477.49 L780.26 477.37 L788.50 477.00 L797.75 476.30 L807.95 475.33 L818.05 474.24 L827.00 473.20 L834.33 472.29 L840.66 471.41 L846.58 470.45 L852.70 469.30 L859.10 467.97 L865.50 466.50 L871.90 464.83 L878.30 462.90 L884.72 460.69 L891.14 458.23 L897.57 455.53 L904.00 452.60 L910.43 449.40 L916.86 445.95 L923.28 442.30 L929.70 438.50 L936.17 434.63 L942.66 430.63 L949.08 426.39 L955.30 421.80 L961.34 416.81 L967.24 411.48 L972.95 405.86 L978.40 400.00 L983.94 393.19 L989.49 385.64 L994.32 378.77 L997.70 374.00" stroke="#48d4d0" stroke-width="1.0" fill="none" shape-rendering="crispEdges" stroke-linejoin="round" clip-path="url(#c504_275)"/>
<rect x="1" y="514" width="502" height="1" fill="#000"/>
<rect x="1" y="751" width="502" height="1" fill="#000"/>
<rect x="1" y="514" width="1" height="238" fill="#000"/>
<rect x="502" y="514" width="1" height="238" fill="#000"/>
<rect x="2" y="515" width="499" height="235" fill="#808080"/>
<rect x="1" y="750" width="502" height="1" fill="#000"/>
<rect x="501" y="514" width="1" height="238" fill="#000"/>
<rect x="2" y="515" width="500" height="1" fill="#d8d8d8"/>
<rect x="2" y="515" width="1" height="235" fill="#d8d8d8"/>
<rect x="3" y="516" width="499" height="1" fill="#b4b4b4"/>
<rect x="3" y="516" width="1" height="234" fill="#b4b4b4"/>
<rect x="8" y="522" width="38" height="16" fill="#dccbc3"/>
<rect x="8" y="522" width="38" height="1" fill="#f4ece8"/>
<rect x="8" y="522" width="1" height="16" fill="#f4ece8"/>
<rect x="8" y="537" width="38" height="1" fill="#3c302c"/>
<rect x="45" y="522" width="1" height="16" fill="#3c302c"/>
<rect x="9" y="536" width="36" height="1" fill="#9a8a84"/>
<rect x="44" y="523" width="1" height="14" fill="#9a8a84"/>
<text x="27.0" y="533" font-size="11" fill="#000" text-anchor="middle" textLength="25" lengthAdjust="spacingAndGlyphs">Clear</text>
<rect x="49" y="522" width="43" height="16" fill="#dccbc3"/>
<rect x="49" y="522" width="43" height="1" fill="#000"/>
<rect x="49" y="537" width="43" height="1" fill="#000"/>
<rect x="49" y="522" width="1" height="16" fill="#000"/>
<rect x="91" y="522" width="1" height="16" fill="#000"/>
<rect x="50" y="523" width="41" height="1" fill="#3c302c"/>
<rect x="50" y="523" width="1" height="14" fill="#3c302c"/>
<rect x="50" y="536" width="41" height="1" fill="#f4ece8"/>
<rect x="90" y="523" width="1" height="14" fill="#f4ece8"/>
<text x="70.5" y="533" font-size="11" fill="#000" text-anchor="middle" textLength="32" lengthAdjust="spacingAndGlyphs">Cursor</text>
<text x="254" y="537" font-size="12" fill="#000" font-weight="bold" text-anchor="middle" textLength="220" lengthAdjust="spacingAndGlyphs">Maximum Acoustic Power (dBPWL/Hz)</text>
<text x="253" y="536" font-size="12" fill="#fff" font-weight="bold" text-anchor="middle" textLength="220" lengthAdjust="spacingAndGlyphs">Maximum Acoustic Power (dBPWL/Hz)</text>
<rect x="36" y="548" width="458" height="179" fill="#000"/>
<defs><clipPath id="c1_514"><rect x="36" y="548" width="458" height="179"/></clipPath></defs>
<rect x="49" y="548" width="1" height="179" fill="#9c9c9c"/>
<rect x="61" y="548" width="1" height="179" fill="#9c9c9c"/>
<rect x="71" y="548" width="1" height="179" fill="#9c9c9c"/>
<rect x="80" y="548" width="1" height="179" fill="#9c9c9c"/>
<rect x="88" y="548" width="1" height="179" fill="#9c9c9c"/>
<rect x="141" y="548" width="1" height="179" fill="#9c9c9c"/>
<rect x="172" y="548" width="1" height="179" fill="#9c9c9c"/>
<rect x="194" y="548" width="1" height="179" fill="#9c9c9c"/>
<rect x="212" y="548" width="1" height="179" fill="#9c9c9c"/>
<rect x="226" y="548" width="1" height="179" fill="#9c9c9c"/>
<rect x="237" y="548" width="1" height="179" fill="#9c9c9c"/>
<rect x="248" y="548" width="1" height="179" fill="#9c9c9c"/>
<rect x="257" y="548" width="1" height="179" fill="#9c9c9c"/>
<rect x="265" y="548" width="1" height="179" fill="#9c9c9c"/>
<rect x="318" y="548" width="1" height="179" fill="#9c9c9c"/>
<rect x="349" y="548" width="1" height="179" fill="#9c9c9c"/>
<rect x="371" y="548" width="1" height="179" fill="#9c9c9c"/>
<rect x="388" y="548" width="1" height="179" fill="#9c9c9c"/>
<rect x="402" y="548" width="1" height="179" fill="#9c9c9c"/>
<rect x="414" y="548" width="1" height="179" fill="#9c9c9c"/>
<rect x="424" y="548" width="1" height="179" fill="#9c9c9c"/>
<rect x="433" y="548" width="1" height="179" fill="#9c9c9c"/>
<rect x="441" y="548" width="1" height="179" fill="#9c9c9c"/>
<rect x="36" y="557" width="458" height="1" fill="#9c9c9c"/>
<rect x="36" y="567" width="458" height="1" fill="#9c9c9c"/>
<rect x="36" y="577" width="458" height="1" fill="#9c9c9c"/>
<rect x="36" y="587" width="458" height="1" fill="#9c9c9c"/>
<rect x="36" y="597" width="458" height="1" fill="#9c9c9c"/>
<rect x="36" y="607" width="458" height="1" fill="#9c9c9c"/>
<rect x="36" y="617" width="458" height="1" fill="#9c9c9c"/>
<rect x="36" y="627" width="458" height="1" fill="#9c9c9c"/>
<rect x="36" y="637" width="458" height="1" fill="#9c9c9c"/>
<rect x="36" y="647" width="458" height="1" fill="#9c9c9c"/>
<rect x="36" y="657" width="458" height="1" fill="#9c9c9c"/>
<rect x="36" y="667" width="458" height="1" fill="#9c9c9c"/>
<rect x="36" y="677" width="458" height="1" fill="#9c9c9c"/>
<rect x="36" y="687" width="458" height="1" fill="#9c9c9c"/>
<rect x="36" y="697" width="458" height="1" fill="#9c9c9c"/>
<rect x="36" y="707" width="458" height="1" fill="#9c9c9c"/>
<rect x="36" y="717" width="458" height="1" fill="#9c9c9c"/>
<rect x="34" y="546" width="462" height="2" fill="#d4d4d4"/>
<rect x="34" y="727" width="462" height="2" fill="#d4d4d4"/>
<rect x="34" y="546" width="2" height="183" fill="#d4d4d4"/>
<rect x="494" y="546" width="2" height="183" fill="#d4d4d4"/>
<rect x="35" y="729" width="1" height="3" fill="#e0e0e0"/>
<rect x="49" y="729" width="1" height="3" fill="#e0e0e0"/>
<rect x="61" y="729" width="1" height="3" fill="#e0e0e0"/>
<rect x="71" y="729" width="1" height="3" fill="#e0e0e0"/>
<rect x="80" y="729" width="1" height="3" fill="#e0e0e0"/>
<rect x="88" y="729" width="1" height="3" fill="#e0e0e0"/>
<rect x="141" y="729" width="1" height="3" fill="#e0e0e0"/>
<rect x="172" y="729" width="1" height="3" fill="#e0e0e0"/>
<rect x="194" y="729" width="1" height="3" fill="#e0e0e0"/>
<rect x="212" y="729" width="1" height="3" fill="#e0e0e0"/>
<rect x="226" y="729" width="1" height="3" fill="#e0e0e0"/>
<rect x="237" y="729" width="1" height="3" fill="#e0e0e0"/>
<rect x="248" y="729" width="1" height="3" fill="#e0e0e0"/>
<rect x="257" y="729" width="1" height="3" fill="#e0e0e0"/>
<rect x="265" y="729" width="1" height="3" fill="#e0e0e0"/>
<rect x="318" y="729" width="1" height="3" fill="#e0e0e0"/>
<rect x="349" y="729" width="1" height="3" fill="#e0e0e0"/>
<rect x="371" y="729" width="1" height="3" fill="#e0e0e0"/>
<rect x="388" y="729" width="1" height="3" fill="#e0e0e0"/>
<rect x="402" y="729" width="1" height="3" fill="#e0e0e0"/>
<rect x="414" y="729" width="1" height="3" fill="#e0e0e0"/>
<rect x="424" y="729" width="1" height="3" fill="#e0e0e0"/>
<rect x="433" y="729" width="1" height="3" fill="#e0e0e0"/>
<rect x="441" y="729" width="1" height="3" fill="#e0e0e0"/>
<rect x="494" y="729" width="1" height="3" fill="#e0e0e0"/>
<rect x="496" y="557" width="3" height="1" fill="#e0e0e0"/>
<rect x="31" y="557" width="3" height="1" fill="#e0e0e0"/>
<text x="28" y="562" font-size="12" fill="#f4f4f4" text-anchor="end" letter-spacing="0.3">dB</text>
<rect x="496" y="577" width="3" height="1" fill="#e0e0e0"/>
<rect x="31" y="577" width="3" height="1" fill="#e0e0e0"/>
<text x="28" y="582" font-size="12" fill="#f4f4f4" text-anchor="end" letter-spacing="0.3">129</text>
<rect x="496" y="597" width="3" height="1" fill="#e0e0e0"/>
<rect x="31" y="597" width="3" height="1" fill="#e0e0e0"/>
<text x="28" y="602" font-size="12" fill="#f4f4f4" font-weight="bold" text-anchor="end">123</text>
<rect x="496" y="617" width="3" height="1" fill="#e0e0e0"/>
<rect x="31" y="617" width="3" height="1" fill="#e0e0e0"/>
<text x="28" y="622" font-size="12" fill="#f4f4f4" text-anchor="end" letter-spacing="0.3">117</text>
<rect x="496" y="637" width="3" height="1" fill="#e0e0e0"/>
<rect x="31" y="637" width="3" height="1" fill="#e0e0e0"/>
<text x="28" y="642" font-size="12" fill="#f4f4f4" text-anchor="end" letter-spacing="0.3">111</text>
<rect x="496" y="657" width="3" height="1" fill="#e0e0e0"/>
<rect x="31" y="657" width="3" height="1" fill="#e0e0e0"/>
<text x="28" y="662" font-size="12" fill="#f4f4f4" text-anchor="end" letter-spacing="0.3">105</text>
<rect x="496" y="677" width="3" height="1" fill="#e0e0e0"/>
<rect x="31" y="677" width="3" height="1" fill="#e0e0e0"/>
<text x="28" y="682" font-size="12" fill="#f4f4f4" text-anchor="end" letter-spacing="0.3">99</text>
<rect x="496" y="697" width="3" height="1" fill="#e0e0e0"/>
<rect x="31" y="697" width="3" height="1" fill="#e0e0e0"/>
<text x="28" y="702" font-size="12" fill="#f4f4f4" text-anchor="end" letter-spacing="0.3">93</text>
<rect x="496" y="717" width="3" height="1" fill="#e0e0e0"/>
<rect x="31" y="717" width="3" height="1" fill="#e0e0e0"/>
<text x="28" y="722" font-size="12" fill="#f4f4f4" text-anchor="end" letter-spacing="0.3">87</text>
<text x="33" y="745" font-size="12" fill="#f4f4f4" letter-spacing="0.3">5 Hz</text>
<text x="88.73824788488781" y="745" font-size="12" fill="#f4f4f4" text-anchor="middle" letter-spacing="0.3">10</text>
<text x="212.07500000000002" y="745" font-size="12" fill="#f4f4f4" text-anchor="middle" letter-spacing="0.3">50</text>
<text x="265.1932478848878" y="745" font-size="12" fill="#f4f4f4" text-anchor="middle" letter-spacing="0.3">100</text>
<text x="388.53000000000003" y="745" font-size="12" fill="#f4f4f4" text-anchor="middle" letter-spacing="0.3">500</text>
<text x="441.64824788488784" y="745" font-size="12" fill="#f4f4f4" text-anchor="middle" letter-spacing="0.3">1000</text>
<text x="497" y="745" font-size="12" fill="#f4f4f4" text-anchor="end" letter-spacing="0.3">2000</text>
<text x="494" y="535" font-size="11" fill="#38d8e0" text-anchor="end" textLength="117" lengthAdjust="spacingAndGlyphs">Therm. Limit: 123 dBPWL</text>
<rect x="36" y="597" width="458" height="1" fill="#48d4d0"/>
<path d="M120.50 728.00 L124.00 722.74 L128.95 715.26 L134.90 706.47 L141.40 697.30 L148.80 687.36 L157.18 676.37 L165.67 665.42 L173.40 655.60 L180.05 647.37 L186.11 640.09 L191.94 633.19 L197.90 626.10 L204.05 618.55 L210.20 610.89 L216.35 603.45 L222.50 596.60 L228.74 590.38 L235.06 584.63 L241.21 579.34 L247.00 574.50 L252.30 570.28 L257.24 566.64 L261.99 563.22 L266.70 559.70 L271.80 555.67 L277.08 551.43 L281.74 547.64 L285.00 545.00" stroke="#c83cc8" stroke-width="1.0" fill="none" shape-rendering="crispEdges" stroke-linejoin="round" clip-path="url(#c1_514)"/>
<path d="M89.80 728.00 L92.52 723.79 L96.43 717.73 L100.73 710.99 L104.60 704.70 L107.85 699.21 L110.91 693.88 L113.89 688.44 L116.90 682.60 L120.07 676.08 L123.31 669.10 L126.39 662.12 L129.10 655.60 L131.35 649.73 L133.26 644.25 L134.94 638.92 L136.50 633.50 L137.93 627.78 L139.18 621.94 L140.32 616.32 L141.40 611.30 L142.38 606.90 L143.25 602.94 L144.12 599.49 L145.10 596.60 L146.21 594.16 L147.39 592.18 L148.66 590.88 L150.00 590.50 L151.43 591.41 L152.95 593.38 L154.54 595.74 L156.20 597.80 L157.89 599.49 L159.62 601.12 L161.47 602.65 L163.50 604.00 L165.79 605.22 L168.29 606.32 L170.87 607.19 L173.40 607.70 L175.74 607.84 L178.00 607.66 L180.41 607.18 L183.20 606.40 L186.53 605.24 L190.24 603.73 L194.10 602.03 L197.90 600.30 L201.60 598.54 L205.30 596.68 L209.00 594.78 L212.70 592.90 L216.44 591.08 L220.21 589.27 L223.90 587.43 L227.40 585.50 L230.53 583.55 L233.39 581.58 L236.34 579.42 L239.70 576.90 L243.77 573.75 L248.30 570.15 L252.83 566.55 L256.90 563.40 L260.24 560.93 L263.14 558.87 L265.99 556.92 L269.20 554.80 L273.27 552.20 L277.87 549.36 L282.08 546.79 L285.00 545.00" stroke="#48d4d0" stroke-width="1.0" fill="none" shape-rendering="crispEdges" stroke-linejoin="round" clip-path="url(#c1_514)"/>
<rect x="150" y="571" width="1" height="39" fill="#fff"/>
<rect x="131" y="590" width="39" height="1" fill="#fff"/>
<rect x="143" y="583" width="1" height="15" fill="#fff"/>
<rect x="157" y="583" width="1" height="15" fill="#fff"/>
<rect x="143" y="583" width="15" height="1" fill="#fff"/>
<rect x="143" y="597" width="15" height="1" fill="#b02020"/>
<rect x="504" y="514" width="502" height="1" fill="#000"/>
<rect x="504" y="751" width="502" height="1" fill="#000"/>
<rect x="504" y="514" width="1" height="238" fill="#000"/>
<rect x="1005" y="514" width="1" height="238" fill="#000"/>
<rect x="505" y="515" width="499" height="235" fill="#808080"/>
<rect x="504" y="750" width="502" height="1" fill="#000"/>
<rect x="1004" y="514" width="1" height="238" fill="#000"/>
<rect x="505" y="515" width="500" height="1" fill="#d8d8d8"/>
<rect x="505" y="515" width="1" height="235" fill="#d8d8d8"/>
<rect x="506" y="516" width="499" height="1" fill="#b4b4b4"/>
<rect x="506" y="516" width="1" height="234" fill="#b4b4b4"/>
<rect x="511" y="522" width="38" height="16" fill="#dccbc3"/>
<rect x="511" y="522" width="38" height="1" fill="#000"/>
<rect x="511" y="537" width="38" height="1" fill="#000"/>
<rect x="511" y="522" width="1" height="16" fill="#000"/>
<rect x="548" y="522" width="1" height="16" fill="#000"/>
<rect x="512" y="523" width="36" height="1" fill="#3c302c"/>
<rect x="512" y="523" width="1" height="14" fill="#3c302c"/>
<rect x="512" y="536" width="36" height="1" fill="#f4ece8"/>
<rect x="547" y="523" width="1" height="14" fill="#f4ece8"/>
<text x="530.0" y="533" font-size="11" fill="#000" text-anchor="middle" textLength="25" lengthAdjust="spacingAndGlyphs">Clear</text>
<rect x="552" y="522" width="43" height="16" fill="#dccbc3"/>
<rect x="552" y="522" width="43" height="1" fill="#f4ece8"/>
<rect x="552" y="522" width="1" height="16" fill="#f4ece8"/>
<rect x="552" y="537" width="43" height="1" fill="#3c302c"/>
<rect x="594" y="522" width="1" height="16" fill="#3c302c"/>
<rect x="553" y="536" width="41" height="1" fill="#9a8a84"/>
<rect x="593" y="523" width="1" height="14" fill="#9a8a84"/>
<text x="573.5" y="533" font-size="11" fill="#000" text-anchor="middle" textLength="32" lengthAdjust="spacingAndGlyphs">Cursor</text>
<text x="754" y="537" font-size="12" fill="#000" font-weight="bold" text-anchor="middle" textLength="172" lengthAdjust="spacingAndGlyphs">Phase Response (Degrees/Hz)</text>
<text x="753" y="536" font-size="12" fill="#fff" font-weight="bold" text-anchor="middle" textLength="172" lengthAdjust="spacingAndGlyphs">Phase Response (Degrees/Hz)</text>
<rect x="539" y="548" width="458" height="179" fill="#000"/>
<defs><clipPath id="c504_514"><rect x="539" y="548" width="458" height="179"/></clipPath></defs>
<rect x="552" y="548" width="1" height="179" fill="#9c9c9c"/>
<rect x="564" y="548" width="1" height="179" fill="#9c9c9c"/>
<rect x="574" y="548" width="1" height="179" fill="#9c9c9c"/>
<rect x="583" y="548" width="1" height="179" fill="#9c9c9c"/>
<rect x="591" y="548" width="1" height="179" fill="#9c9c9c"/>
<rect x="644" y="548" width="1" height="179" fill="#9c9c9c"/>
<rect x="675" y="548" width="1" height="179" fill="#9c9c9c"/>
<rect x="697" y="548" width="1" height="179" fill="#9c9c9c"/>
<rect x="715" y="548" width="1" height="179" fill="#9c9c9c"/>
<rect x="729" y="548" width="1" height="179" fill="#9c9c9c"/>
<rect x="740" y="548" width="1" height="179" fill="#9c9c9c"/>
<rect x="751" y="548" width="1" height="179" fill="#9c9c9c"/>
<rect x="760" y="548" width="1" height="179" fill="#9c9c9c"/>
<rect x="768" y="548" width="1" height="179" fill="#9c9c9c"/>
<rect x="821" y="548" width="1" height="179" fill="#9c9c9c"/>
<rect x="852" y="548" width="1" height="179" fill="#9c9c9c"/>
<rect x="874" y="548" width="1" height="179" fill="#9c9c9c"/>
<rect x="891" y="548" width="1" height="179" fill="#9c9c9c"/>
<rect x="905" y="548" width="1" height="179" fill="#9c9c9c"/>
<rect x="917" y="548" width="1" height="179" fill="#9c9c9c"/>
<rect x="927" y="548" width="1" height="179" fill="#9c9c9c"/>
<rect x="936" y="548" width="1" height="179" fill="#9c9c9c"/>
<rect x="944" y="548" width="1" height="179" fill="#9c9c9c"/>
<rect x="539" y="557" width="458" height="1" fill="#9c9c9c"/>
<rect x="539" y="567" width="458" height="1" fill="#9c9c9c"/>
<rect x="539" y="577" width="458" height="1" fill="#9c9c9c"/>
<rect x="539" y="587" width="458" height="1" fill="#9c9c9c"/>
<rect x="539" y="597" width="458" height="1" fill="#9c9c9c"/>
<rect x="539" y="607" width="458" height="1" fill="#9c9c9c"/>
<rect x="539" y="617" width="458" height="1" fill="#9c9c9c"/>
<rect x="539" y="627" width="458" height="1" fill="#9c9c9c"/>
<rect x="539" y="637" width="458" height="1" fill="#9c9c9c"/>
<rect x="539" y="647" width="458" height="1" fill="#9c9c9c"/>
<rect x="539" y="657" width="458" height="1" fill="#9c9c9c"/>
<rect x="539" y="667" width="458" height="1" fill="#9c9c9c"/>
<rect x="539" y="677" width="458" height="1" fill="#9c9c9c"/>
<rect x="539" y="687" width="458" height="1" fill="#9c9c9c"/>
<rect x="539" y="697" width="458" height="1" fill="#9c9c9c"/>
<rect x="539" y="707" width="458" height="1" fill="#9c9c9c"/>
<rect x="539" y="717" width="458" height="1" fill="#9c9c9c"/>
<rect x="537" y="546" width="462" height="2" fill="#d4d4d4"/>
<rect x="537" y="727" width="462" height="2" fill="#d4d4d4"/>
<rect x="537" y="546" width="2" height="183" fill="#d4d4d4"/>
<rect x="997" y="546" width="2" height="183" fill="#d4d4d4"/>
<rect x="538" y="729" width="1" height="3" fill="#e0e0e0"/>
<rect x="552" y="729" width="1" height="3" fill="#e0e0e0"/>
<rect x="564" y="729" width="1" height="3" fill="#e0e0e0"/>
<rect x="574" y="729" width="1" height="3" fill="#e0e0e0"/>
<rect x="583" y="729" width="1" height="3" fill="#e0e0e0"/>
<rect x="591" y="729" width="1" height="3" fill="#e0e0e0"/>
<rect x="644" y="729" width="1" height="3" fill="#e0e0e0"/>
<rect x="675" y="729" width="1" height="3" fill="#e0e0e0"/>
<rect x="697" y="729" width="1" height="3" fill="#e0e0e0"/>
<rect x="715" y="729" width="1" height="3" fill="#e0e0e0"/>
<rect x="729" y="729" width="1" height="3" fill="#e0e0e0"/>
<rect x="740" y="729" width="1" height="3" fill="#e0e0e0"/>
<rect x="751" y="729" width="1" height="3" fill="#e0e0e0"/>
<rect x="760" y="729" width="1" height="3" fill="#e0e0e0"/>
<rect x="768" y="729" width="1" height="3" fill="#e0e0e0"/>
<rect x="821" y="729" width="1" height="3" fill="#e0e0e0"/>
<rect x="852" y="729" width="1" height="3" fill="#e0e0e0"/>
<rect x="874" y="729" width="1" height="3" fill="#e0e0e0"/>
<rect x="891" y="729" width="1" height="3" fill="#e0e0e0"/>
<rect x="905" y="729" width="1" height="3" fill="#e0e0e0"/>
<rect x="917" y="729" width="1" height="3" fill="#e0e0e0"/>
<rect x="927" y="729" width="1" height="3" fill="#e0e0e0"/>
<rect x="936" y="729" width="1" height="3" fill="#e0e0e0"/>
<rect x="944" y="729" width="1" height="3" fill="#e0e0e0"/>
<rect x="997" y="729" width="1" height="3" fill="#e0e0e0"/>
<rect x="999" y="547" width="3" height="1" fill="#e0e0e0"/>
<rect x="534" y="547" width="3" height="1" fill="#e0e0e0"/>
<text x="534" y="551" font-size="11" fill="#f4f4f4" text-anchor="end">360°</text>
<rect x="999" y="567" width="3" height="1" fill="#e0e0e0"/>
<rect x="534" y="567" width="3" height="1" fill="#e0e0e0"/>
<text x="534" y="571" font-size="11" fill="#f4f4f4" text-anchor="end">320°</text>
<rect x="999" y="587" width="3" height="1" fill="#e0e0e0"/>
<rect x="534" y="587" width="3" height="1" fill="#e0e0e0"/>
<text x="534" y="591" font-size="11" fill="#f4f4f4" text-anchor="end">280°</text>
<rect x="999" y="607" width="3" height="1" fill="#e0e0e0"/>
<rect x="534" y="607" width="3" height="1" fill="#e0e0e0"/>
<text x="534" y="611" font-size="11" fill="#f4f4f4" text-anchor="end">240°</text>
<rect x="999" y="627" width="3" height="1" fill="#e0e0e0"/>
<rect x="534" y="627" width="3" height="1" fill="#e0e0e0"/>
<text x="534" y="631" font-size="11" fill="#f4f4f4" text-anchor="end">200°</text>
<rect x="999" y="647" width="3" height="1" fill="#e0e0e0"/>
<rect x="534" y="647" width="3" height="1" fill="#e0e0e0"/>
<text x="534" y="651" font-size="11" fill="#f4f4f4" text-anchor="end">160°</text>
<rect x="999" y="667" width="3" height="1" fill="#e0e0e0"/>
<rect x="534" y="667" width="3" height="1" fill="#e0e0e0"/>
<text x="534" y="671" font-size="11" fill="#f4f4f4" text-anchor="end">120°</text>
<rect x="999" y="687" width="3" height="1" fill="#e0e0e0"/>
<rect x="534" y="687" width="3" height="1" fill="#e0e0e0"/>
<text x="534" y="691" font-size="11" fill="#f4f4f4" text-anchor="end">80°</text>
<rect x="999" y="707" width="3" height="1" fill="#e0e0e0"/>
<rect x="534" y="707" width="3" height="1" fill="#e0e0e0"/>
<text x="534" y="711" font-size="11" fill="#f4f4f4" text-anchor="end">40°</text>
<rect x="999" y="727" width="3" height="1" fill="#e0e0e0"/>
<rect x="534" y="727" width="3" height="1" fill="#e0e0e0"/>
<text x="534" y="731" font-size="11" fill="#f4f4f4" text-anchor="end">0°</text>
<text x="536" y="745" font-size="12" fill="#f4f4f4" letter-spacing="0.3">5 Hz</text>
<text x="591.7382478848879" y="745" font-size="12" fill="#f4f4f4" text-anchor="middle" letter-spacing="0.3">10</text>
<text x="715.075" y="745" font-size="12" fill="#f4f4f4" text-anchor="middle" letter-spacing="0.3">50</text>
<text x="768.1932478848878" y="745" font-size="12" fill="#f4f4f4" text-anchor="middle" letter-spacing="0.3">100</text>
<text x="891.53" y="745" font-size="12" fill="#f4f4f4" text-anchor="middle" letter-spacing="0.3">500</text>
<text x="944.6482478848878" y="745" font-size="12" fill="#f4f4f4" text-anchor="middle" letter-spacing="0.3">1000</text>
<text x="1000" y="745" font-size="12" fill="#f4f4f4" text-anchor="end" letter-spacing="0.3">2000</text>
<path d="M539.70 643.30 L543.37 643.47 L548.62 643.70 L554.63 644.03 L560.60 644.50 L566.47 645.14 L572.62 645.91 L578.88 646.78 L585.10 647.70 L591.24 648.64 L597.39 649.62 L603.55 650.69 L609.70 651.90 L615.85 653.23 L622.01 654.67 L628.16 656.25 L634.30 658.00 L640.60 660.04 L647.01 662.32 L653.19 664.60 L658.80 666.60 L663.55 668.18 L667.70 669.50 L671.70 670.80 L676.00 672.30 L680.75 674.08 L685.69 676.02 L690.72 678.04 L695.70 680.10 L700.57 682.16 L705.40 684.27 L710.31 686.44 L715.40 688.70 L720.98 691.24 L726.90 693.98 L732.59 696.56 L737.50 698.60 L740.99 699.82 L743.52 700.47 L746.17 701.01 L750.00 701.90 L755.50 703.28 L762.03 704.91 L768.97 706.63 L775.70 708.30 L782.10 709.96 L788.50 711.66 L794.90 713.28 L801.30 714.70 L807.72 715.88 L814.14 716.89 L820.57 717.78 L827.00 718.60 L833.43 719.34 L839.86 719.98 L846.28 720.56 L852.70 721.10 L859.10 721.60 L865.50 722.06 L871.90 722.48 L878.30 722.90 L884.72 723.33 L891.14 723.75 L897.57 724.15 L904.00 724.50 L910.34 724.80 L916.63 725.07 L923.02 725.30 L929.70 725.50 L937.46 725.67 L945.96 725.81 L953.65 725.92 L959.00 726.00" stroke="#c83cc8" stroke-width="1.0" fill="none" shape-rendering="crispEdges" stroke-linejoin="round" clip-path="url(#c504_514)"/>
<path d="M539.70 558.50 L543.54 559.40 L549.08 560.69 L555.15 562.11 L560.60 563.40 L565.22 564.45 L569.59 565.41 L573.76 566.41 L577.80 567.60 L581.71 569.04 L585.46 570.65 L589.05 572.33 L592.50 574.00 L595.63 575.42 L598.49 576.70 L601.44 578.28 L604.80 580.60 L608.87 583.97 L613.40 588.09 L617.93 592.47 L622.00 596.60 L625.48 600.36 L628.61 604.02 L631.52 607.65 L634.30 611.30 L636.93 615.05 L639.36 618.85 L641.71 622.57 L644.10 626.10 L646.55 629.41 L648.99 632.56 L651.44 635.56 L653.90 638.40 L656.31 641.03 L658.70 643.46 L661.16 645.81 L663.80 648.20 L666.51 650.53 L669.29 652.79 L672.37 655.20 L676.00 658.00 L680.40 661.36 L685.38 665.12 L690.60 669.02 L695.70 672.80 L700.57 676.45 L705.40 680.10 L710.31 683.65 L715.40 687.00 L720.81 690.18 L726.46 693.23 L732.09 696.06 L737.50 698.60 L742.59 700.80 L747.50 702.71 L752.31 704.39 L757.10 705.90 L761.72 707.16 L766.19 708.17 L770.84 709.09 L776.00 710.10 L781.87 711.24 L788.22 712.42 L794.80 713.59 L801.30 714.70 L807.70 715.76 L814.12 716.78 L820.57 717.74 L827.00 718.60 L833.43 719.34 L839.86 719.98 L846.28 720.56 L852.70 721.10 L859.10 721.60 L865.50 722.06 L871.90 722.48 L878.30 722.90 L884.72 723.33 L891.14 723.75 L897.57 724.15 L904.00 724.50 L910.34 724.80 L916.63 725.07 L923.02 725.30 L929.70 725.50 L937.46 725.67 L945.96 725.81 L953.65 725.92 L959.00 726.00" stroke="#48d4d0" stroke-width="1.0" fill="none" shape-rendering="crispEdges" stroke-linejoin="round" clip-path="url(#c504_514)"/>
<rect x="960" y="726" width="38" height="3" fill="#48d4d0"/>
</svg></body></html>
